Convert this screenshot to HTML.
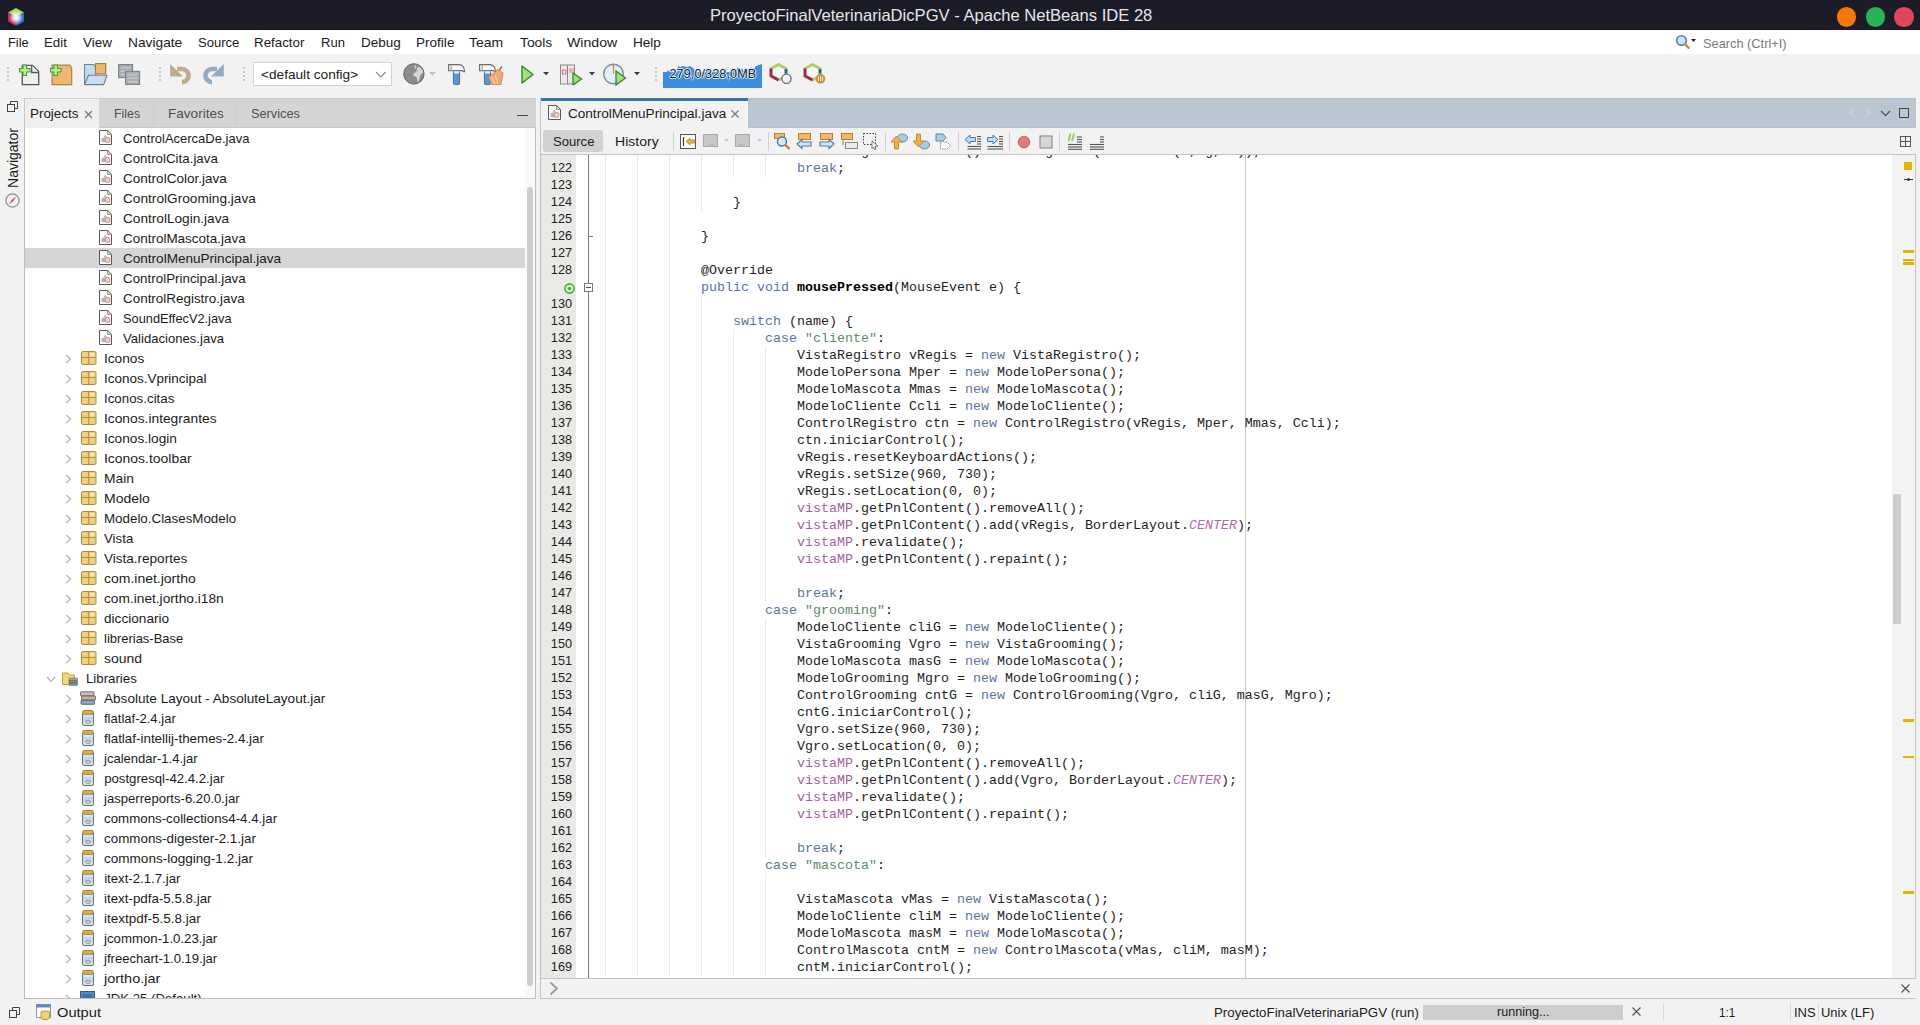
<!DOCTYPE html>
<html><head><meta charset="utf-8"><title>NetBeans</title>
<style>html,body{margin:0;padding:0;width:1920px;height:1025px;overflow:hidden;background:#f2f2f2;position:relative;font-family:'Liberation Sans', sans-serif}
svg{display:block}</style></head><body>
<div style="position:absolute;left:0px;top:0px;width:1920px;height:30px;background:#1b1c28;"></div><svg style="position:absolute;left:7px;top:7px" width="18" height="20" viewBox="0 0 18 20">
<defs><radialGradient id="ag" cx="0.5" cy="0.5" r="0.5"><stop offset="0" stop-color="#ffffff" stop-opacity="1"/><stop offset="0.45" stop-color="#ffffff" stop-opacity="0.75"/><stop offset="1" stop-color="#ffffff" stop-opacity="0"/></radialGradient></defs>
<polygon points="9,1 17,5.5 9,10 1,5.5" fill="#b5d65e"/>
<polygon points="1,5.5 9,10 9,19 1,14.5" fill="#c42a5c"/>
<polygon points="17,5.5 17,14.5 9,19 9,10" fill="#2f6fc0"/>
<circle cx="9" cy="10.5" r="7" fill="url(#ag)"/>
</svg><div style="position:absolute;left:710px;top:7.33px;white-space:pre;font-family:'Liberation Sans', sans-serif;font-size:16.5px;line-height:16.5px;color:#e6e6e9;transform:scaleX(1.0048);transform-origin:0 0;">ProyectoFinalVeterinariaDicPGV - Apache NetBeans IDE 28</div><div style="position:absolute;left:1836.75px;top:7px;width:19.5px;height:19.5px;border-radius:50%;background:#f57900"></div><div style="position:absolute;left:1865.75px;top:7px;width:19.5px;height:19.5px;border-radius:50%;background:#2ab256"></div><div style="position:absolute;left:1894.25px;top:7px;width:19.5px;height:19.5px;border-radius:50%;background:#e0465a"></div><div style="position:absolute;left:0px;top:30px;width:1920px;height:24px;background:#ffffff;"></div><div style="position:absolute;left:8.3px;top:35.96px;white-space:pre;font-family:'Liberation Sans', sans-serif;font-size:13.4px;line-height:13.4px;color:#1a1a1a;transform:scaleX(0.9536);transform-origin:0 0;">File</div><div style="position:absolute;left:44.3px;top:35.96px;white-space:pre;font-family:'Liberation Sans', sans-serif;font-size:13.4px;line-height:13.4px;color:#1a1a1a;transform:scaleX(0.993);transform-origin:0 0;">Edit</div><div style="position:absolute;left:83.3px;top:35.96px;white-space:pre;font-family:'Liberation Sans', sans-serif;font-size:13.4px;line-height:13.4px;color:#1a1a1a;transform:scaleX(1.0046);transform-origin:0 0;">View</div><div style="position:absolute;left:127.5px;top:35.96px;white-space:pre;font-family:'Liberation Sans', sans-serif;font-size:13.4px;line-height:13.4px;color:#1a1a1a;transform:scaleX(1.026);transform-origin:0 0;">Navigate</div><div style="position:absolute;left:197.5px;top:35.96px;white-space:pre;font-family:'Liberation Sans', sans-serif;font-size:13.4px;line-height:13.4px;color:#1a1a1a;transform:scaleX(0.9754);transform-origin:0 0;">Source</div><div style="position:absolute;left:254.3px;top:35.96px;white-space:pre;font-family:'Liberation Sans', sans-serif;font-size:13.4px;line-height:13.4px;color:#1a1a1a;transform:scaleX(0.9958);transform-origin:0 0;">Refactor</div><div style="position:absolute;left:320.5px;top:35.96px;white-space:pre;font-family:'Liberation Sans', sans-serif;font-size:13.4px;line-height:13.4px;color:#1a1a1a;transform:scaleX(0.9724);transform-origin:0 0;">Run</div><div style="position:absolute;left:360.5px;top:35.96px;white-space:pre;font-family:'Liberation Sans', sans-serif;font-size:13.4px;line-height:13.4px;color:#1a1a1a;transform:scaleX(1.0065);transform-origin:0 0;">Debug</div><div style="position:absolute;left:416.3px;top:35.96px;white-space:pre;font-family:'Liberation Sans', sans-serif;font-size:13.4px;line-height:13.4px;color:#1a1a1a;transform:scaleX(1.0121);transform-origin:0 0;">Profile</div><div style="position:absolute;left:469.3px;top:35.96px;white-space:pre;font-family:'Liberation Sans', sans-serif;font-size:13.4px;line-height:13.4px;color:#1a1a1a;transform:scaleX(1.0431);transform-origin:0 0;">Team</div><div style="position:absolute;left:519.5px;top:35.96px;white-space:pre;font-family:'Liberation Sans', sans-serif;font-size:13.4px;line-height:13.4px;color:#1a1a1a;transform:scaleX(1.0312);transform-origin:0 0;">Tools</div><div style="position:absolute;left:567px;top:35.96px;white-space:pre;font-family:'Liberation Sans', sans-serif;font-size:13.4px;line-height:13.4px;color:#1a1a1a;transform:scaleX(1.0551);transform-origin:0 0;">Window</div><div style="position:absolute;left:632.5px;top:35.96px;white-space:pre;font-family:'Liberation Sans', sans-serif;font-size:13.4px;line-height:13.4px;color:#1a1a1a;transform:scaleX(1.014);transform-origin:0 0;">Help</div><svg style="position:absolute;left:1675px;top:34px" width="22" height="16" viewBox="0 0 22 16">
<circle cx="6.5" cy="6.5" r="4.8" fill="#cfe3f7" stroke="#4d7fb8" stroke-width="1.6"/>
<line x1="10" y1="10" x2="13.5" y2="13.8" stroke="#c4862c" stroke-width="2.4" stroke-linecap="round"/>
<polygon points="16,5 21,5 18.5,8" fill="#222"/>
</svg><div style="position:absolute;left:1703px;top:37.53px;white-space:pre;font-family:'Liberation Sans', sans-serif;font-size:12.6px;line-height:12.6px;color:#7a7a7a;transform:scaleX(1.0161);transform-origin:0 0;">Search (Ctrl+I)</div><div style="position:absolute;left:0px;top:54px;width:1920px;height:44px;background:#f2f2f2;"></div><div style="position:absolute;left:7px;top:67px;width:2px;height:2px;background:#c8c8c8;"></div><div style="position:absolute;left:7px;top:71px;width:2px;height:2px;background:#c8c8c8;"></div><div style="position:absolute;left:7px;top:75px;width:2px;height:2px;background:#c8c8c8;"></div><div style="position:absolute;left:7px;top:79px;width:2px;height:2px;background:#c8c8c8;"></div><div style="position:absolute;left:159px;top:67px;width:2px;height:2px;background:#c8c8c8;"></div><div style="position:absolute;left:159px;top:71px;width:2px;height:2px;background:#c8c8c8;"></div><div style="position:absolute;left:159px;top:75px;width:2px;height:2px;background:#c8c8c8;"></div><div style="position:absolute;left:159px;top:79px;width:2px;height:2px;background:#c8c8c8;"></div><div style="position:absolute;left:243px;top:67px;width:2px;height:2px;background:#c8c8c8;"></div><div style="position:absolute;left:243px;top:71px;width:2px;height:2px;background:#c8c8c8;"></div><div style="position:absolute;left:243px;top:75px;width:2px;height:2px;background:#c8c8c8;"></div><div style="position:absolute;left:243px;top:79px;width:2px;height:2px;background:#c8c8c8;"></div><div style="position:absolute;left:655px;top:67px;width:2px;height:2px;background:#c8c8c8;"></div><div style="position:absolute;left:655px;top:71px;width:2px;height:2px;background:#c8c8c8;"></div><div style="position:absolute;left:655px;top:75px;width:2px;height:2px;background:#c8c8c8;"></div><div style="position:absolute;left:655px;top:79px;width:2px;height:2px;background:#c8c8c8;"></div><svg style="position:absolute;left:18px;top:64px" width="22" height="22" viewBox="0 0 22 22"><path d="M4.3 1.3 H14.5 L20.7 7.5 V20.7 H4.3 Z" fill="#efefef" stroke="#555" stroke-width="1.3" stroke-linejoin="miter"/>
<path d="M13.7 1.3 V8.5 H20.7" fill="#f8f8f8" stroke="#555" stroke-width="1.3"/>
<path d="M5 1 H8.5 V4.5 H12 V8 H8.5 V11.5 H5 V8 H1.5 V4.5 H5 Z" fill="#b4f28c" stroke="#4f9a34" stroke-width="1.1"/></svg><svg style="position:absolute;left:50px;top:64px" width="23" height="22" viewBox="0 0 23 22"><path d="M2.1 1.2 H19.5 L21.7 4 V20.7 H2.1 Z" fill="#f0b772" stroke="#a8824a" stroke-width="1.2"/>
<path d="M4 1 H7.5 V4.5 H11 V8 H7.5 V11.5 H4 V8 H0.5 V4.5 H4 Z" fill="#b4f28c" stroke="#4f9a34" stroke-width="1.1"/></svg><svg style="position:absolute;left:84px;top:63px" width="24" height="23" viewBox="0 0 24 23"><path d="M0.5 1.5 H9.5 L12 4.5 V21.5 H0.5 Z" fill="#c4daf0" stroke="#6a8298" stroke-width="1.1"/>
<rect x="11.5" y="0.6" width="10.2" height="10.2" fill="#f0b868" stroke="#9a7a48" stroke-width="1.1"/>
<path d="M4.5 12.3 H23 L19.7 21.6 H0.5 Z" fill="#c8dcf2" stroke="#6a8298" stroke-width="1.1" stroke-linejoin="round"/></svg><svg style="position:absolute;left:118px;top:64px" width="23" height="21" viewBox="0 0 23 21"><rect x="0.6" y="0.6" width="14" height="13" fill="#a9adb1" stroke="#7b8085" stroke-width="1.1"/>
<rect x="2.5" y="3" width="10" height="1.5" fill="#c3c6c9"/><rect x="2.5" y="6.5" width="10" height="1.5" fill="#c3c6c9"/><rect x="2.5" y="10" width="10" height="1.5" fill="#c3c6c9"/>
<rect x="7.6" y="7.4" width="14" height="13" fill="#a9adb1" stroke="#7b8085" stroke-width="1.1"/>
<rect x="9.5" y="10" width="10" height="1.5" fill="#c3c6c9"/><rect x="9.5" y="13.5" width="10" height="1.5" fill="#c3c6c9"/><rect x="9.5" y="17" width="10" height="1.5" fill="#c3c6c9"/></svg><svg style="position:absolute;left:170px;top:63px" width="22" height="22" viewBox="0 0 22 22"><path d="M12 19.1 A6.55 6.55 0 0 0 12 6 H7" fill="none" stroke="#bfad8a" stroke-width="4.7"/>
<polygon points="0.2,1 0.2,13.6 13,13.6" fill="#bfad8a"/></svg><svg style="position:absolute;left:203px;top:63px" width="22" height="22" viewBox="0 0 22 22"><path d="M9 19.1 A6.55 6.55 0 0 1 9 6 H14" fill="none" stroke="#92adc3" stroke-width="4.7"/>
<polygon points="20.8,1 20.8,13.6 8,13.6" fill="#92adc3"/></svg><div style="position:absolute;left:253px;top:62px;width:139px;height:24px;background:#fff;border:1px solid #d2d2d2;border-radius:1px;box-sizing:border-box;"></div><div style="position:absolute;left:260.5px;top:67.61px;white-space:pre;font-family:'Liberation Sans', sans-serif;font-size:13.1px;line-height:13.1px;color:#1a1a1a;transform:scaleX(1.042);transform-origin:0 0;">&lt;default config&gt;</div><svg style="position:absolute;left:375px;top:71px" width="12" height="8" viewBox="0 0 12 8"><polyline points="1,1 5.8,5.8 10.6,1" fill="none" stroke="#8a8a8a" stroke-width="1.2"/></svg><svg style="position:absolute;left:403px;top:63px" width="23" height="23" viewBox="0 0 23 23"><circle cx="10.9" cy="10.9" r="10.2" fill="#8c8c8c" stroke="#666" stroke-width="1"/>
<path d="M15 3.5 C18 4.5 20.2 7 20 9.5 C19 11 17.5 11 17.2 13 C16.5 15 16.8 17 15.5 19 C14.5 19 14.2 17 14 15.5 C13.2 13.8 12 13.2 10.3 12.8 C9.8 11.2 11 9.6 13 9.2 C14 7.2 13.8 5 15 3.5 Z" fill="#d4d4d4"/>
<ellipse cx="12.3" cy="3.8" rx="1.1" ry="2.1" fill="#c4c4c4"/></svg><svg style="position:absolute;left:429px;top:72px" width="7" height="4" viewBox="0 0 7 4"><polygon points="0,0 7,0 3.5,3.5" fill="#bdbdbd"/></svg><svg style="position:absolute;left:448px;top:64px" width="18" height="21" viewBox="0 0 18 21"><path d="M0.6 0.6 H11 C14 0.6 16.2 3 16.6 7.6 L15.6 7.6 C14.6 6.2 13.2 6.7 11.5 6.7 H0.6 Z" fill="#f6f6f6" stroke="#6a6a6a" stroke-width="1.1"/>
<line x1="3.2" y1="0.8" x2="3.2" y2="6.5" stroke="#8a8a8a" stroke-width="0.9"/>
<rect x="5.4" y="7" width="6.2" height="13.6" rx="1.6" fill="#5699d6" stroke="#3b6c9e" stroke-width="0.9"/>
<rect x="6" y="7.2" width="5" height="2.3" fill="#e6eef6"/></svg><svg style="position:absolute;left:479px;top:64px" width="25" height="21" viewBox="0 0 25 21"><path d="M0.6 0.6 H11 C14 0.6 16.2 3 16.6 7.6 L15.6 7.6 C14.6 6.2 13.2 6.7 11.5 6.7 H0.6 Z" fill="#f6f6f6" stroke="#6a6a6a" stroke-width="1.1"/>
<line x1="3.2" y1="0.8" x2="3.2" y2="6.5" stroke="#8a8a8a" stroke-width="0.9"/>
<rect x="5.4" y="7" width="6.2" height="13.6" rx="1.6" fill="#5699d6" stroke="#3b6c9e" stroke-width="0.9"/>
<rect x="6" y="7.2" width="5" height="2.3" fill="#e6eef6"/>
<polygon points="9.8,13.2 18.5,5.5 24,9 21.8,20.7 12.5,20.7" fill="#f2a878" stroke="#d87a48" stroke-width="0.9"/>
<line x1="13" y1="13" x2="16" y2="20" stroke="#f8d0a8" stroke-width="1.2"/><line x1="16.5" y1="11" x2="18.5" y2="20" stroke="#f8d0a8" stroke-width="1.2"/>
<line x1="20" y1="6.5" x2="23" y2="2.5" stroke="#b07050" stroke-width="1.6"/></svg><svg style="position:absolute;left:521px;top:65px" width="13" height="19" viewBox="0 0 13 19"><path d="M1 1 L12 9.5 L1 18 Z" fill="#9ee07a" stroke="#2f8a25" stroke-width="1.4" stroke-linejoin="round"/></svg><svg style="position:absolute;left:543px;top:72px" width="6" height="4" viewBox="0 0 6 4"><polygon points="0,0 6,0 3,3.3" fill="#3a3a3a"/></svg><svg style="position:absolute;left:560px;top:64px" width="23" height="21" viewBox="0 0 23 21"><rect x="0.5" y="1" width="14" height="19" fill="#eaeaea" stroke="#8a8a8a"/>
<line x1="7.5" y1="1" x2="7.5" y2="20" stroke="#8a8a8a"/>
<rect x="2.5" y="6" width="3.5" height="4" fill="none" stroke="#e07070"/>
<rect x="9" y="4" width="5" height="5" fill="#f4b0b0"/>
<path d="M13 9 L21.5 15 L13 21 Z" fill="#9ee07a" stroke="#2f8a25" stroke-width="1.3"/></svg><svg style="position:absolute;left:589px;top:72px" width="6" height="4" viewBox="0 0 6 4"><polygon points="0,0 6,0 3,3.3" fill="#3a3a3a"/></svg><svg style="position:absolute;left:603px;top:63px" width="24" height="23" viewBox="0 0 24 23"><circle cx="10.5" cy="11" r="9.8" fill="#e6f0fa" stroke="#7a8fa5" stroke-width="1.4"/>
<line x1="10.5" y1="1.5" x2="10.5" y2="11" stroke="#c09040" stroke-width="1.2"/>
<path d="M13 8 L22.5 15 L13 22 Z" fill="#9ee07a" stroke="#2f8a25" stroke-width="1.3"/></svg><svg style="position:absolute;left:634px;top:72px" width="6" height="4" viewBox="0 0 6 4"><polygon points="0,0 6,0 3,3.3" fill="#3a3a3a"/></svg><svg style="position:absolute;left:663px;top:64px" width="99" height="24" viewBox="0 0 99 24"><path d="M0 8 L4 8 L5 6 L7 8 L14 8 L15 2 L17 3 L20 2 L24 3 L27 2 L30 4 L33 8 L44 8 L45 5 L47 8 L62 8 L63 4 L64 8 L70 8 L71 4 L73 6 L75 3 L77 7 L79 4 L81 8 L84 5 L86 8 L88 3 L90 6 L93 2 L99 0 V24 H0 Z" fill="#3b8ee0"/></svg><div style="position:absolute;left:669.5px;top:68.33px;white-space:pre;font-family:'Liberation Sans', sans-serif;font-size:12.6px;line-height:12.6px;color:#141c28;letter-spacing:0.1px;text-shadow:-1px 0 0 #dfeeff,1px 0 0 #dfeeff,0 -1px 0 #dfeeff,0 1px 0 #dfeeff;">279,0/328,0MB</div><svg style="position:absolute;left:769px;top:63px" width="24" height="22" viewBox="0 0 24 22"><polygon points="9.5,1.5 17,5.5 17,13 9.5,17 2,13 2,5.5" fill="#f6f9f4" stroke="#a9d05e" stroke-width="2.8"/>
<polyline points="2,5.5 2,13 9.5,17" fill="none" stroke="#a8214f" stroke-width="2.8"/>
<polyline points="17,6 17,10.5" fill="none" stroke="#2d5d9d" stroke-width="2.8"/>
<circle cx="17.5" cy="15.8" r="4.6" fill="#f4f4f4" stroke="#66707a" stroke-width="1.3"/></svg><svg style="position:absolute;left:803px;top:63px" width="24" height="22" viewBox="0 0 24 22"><polygon points="9.5,1.5 17,5.5 17,13 9.5,17 2,13 2,5.5" fill="#f6f9f4" stroke="#a9d05e" stroke-width="2.8"/>
<polyline points="2,5.5 2,13 9.5,17" fill="none" stroke="#a8214f" stroke-width="2.8"/>
<polyline points="17,6 17,10.5" fill="none" stroke="#2d5d9d" stroke-width="2.8"/>
<circle cx="17.5" cy="15.8" r="4.8" fill="#c8923a"/><rect x="15" y="13.5" width="1" height="4.6" fill="#fbe8c0"/><rect x="17" y="13.5" width="1" height="4.6" fill="#fbe8c0"/><rect x="19" y="13.5" width="1" height="4.6" fill="#fbe8c0"/></svg><div style="position:absolute;left:0px;top:98px;width:24px;height:901px;background:#f2f2f2;"></div><svg style="position:absolute;left:7px;top:101px" width="11" height="11" viewBox="0 0 11 11"><rect x="0.5" y="3.5" width="7" height="7" fill="none" stroke="#444"/><path d="M3.5 3.5 V0.5 H10.5 V7.5 H7.5" fill="none" stroke="#444"/></svg><div style="position:absolute;left:-20px;top:151px;width:66px;height:14px;transform:rotate(-90deg);transform-origin:center;white-space:pre;font-family:'Liberation Sans', sans-serif;font-size:14px;line-height:14px;color:#1a1a1a;text-align:center">Navigator</div><svg style="position:absolute;left:5px;top:193px" width="15" height="15" viewBox="0 0 15 15"><circle cx="7.5" cy="7.5" r="6.6" fill="#f4f4f4" stroke="#8a8a8a" stroke-width="1.2"/>
<path d="M11 3.5 L6.5 7 L4 11.5 L8.5 8 Z" fill="#e04a5a"/></svg><div style="position:absolute;left:24px;top:98px;width:512px;height:30px;background:#d4d4d4;border-top:1px solid #c8c8c8;box-sizing:border-box;"></div><div style="position:absolute;left:24px;top:127px;width:512px;height:1px;background:#c6c6c6;"></div><div style="position:absolute;left:24px;top:98px;width:75px;height:30px;background:#efefef;border-top:1px solid #cfcfcf;border-left:1px solid #c8c8c8;box-sizing:border-box;"></div><div style="position:absolute;left:30.4px;top:106.94px;white-space:pre;font-family:'Liberation Sans', sans-serif;font-size:13.3px;line-height:13.3px;color:#1b1b1b;transform:scaleX(1.0082);transform-origin:0 0;">Projects</div><svg style="position:absolute;left:84px;top:110px" width="9" height="9" viewBox="0 0 9 9"><path d="M1 1 L8 8 M8 1 L1 8" stroke="#777" stroke-width="1.2"/></svg><div style="position:absolute;left:113.5px;top:106.94px;white-space:pre;font-family:'Liberation Sans', sans-serif;font-size:13.3px;line-height:13.3px;color:#505050;transform:scaleX(0.9317);transform-origin:0 0;">Files</div><div style="position:absolute;left:153px;top:102px;width:1px;height:24px;background:#cbcbcb;"></div><div style="position:absolute;left:168.2px;top:106.94px;white-space:pre;font-family:'Liberation Sans', sans-serif;font-size:13.3px;line-height:13.3px;color:#505050;transform:scaleX(1.0192);transform-origin:0 0;">Favorites</div><div style="position:absolute;left:236px;top:102px;width:1px;height:24px;background:#cbcbcb;"></div><div style="position:absolute;left:251px;top:106.94px;white-space:pre;font-family:'Liberation Sans', sans-serif;font-size:13.3px;line-height:13.3px;color:#505050;transform:scaleX(0.9585);transform-origin:0 0;">Services</div><div style="position:absolute;left:517px;top:115px;width:11px;height:1.3px;background:#444;"></div><div style="position:absolute;left:24px;top:128px;width:512px;height:871px;background:#ffffff;border-left:1px solid #bdbdbd;border-right:1px solid #bdbdbd;border-bottom:1px solid #bdbdbd;box-sizing:border-box;"></div><div style="position:absolute;left:525px;top:128px;width:10px;height:870px;background:#f9f9f9;"></div><div style="position:absolute;left:527px;top:187px;width:6px;height:799px;background:#cdcdcd;border-radius:3px;"></div><div style="position:absolute;left:25px;top:128px;width:500px;height:870px;overflow:hidden"><svg style="position:absolute;left:74px;top:2px" width="13" height="15" viewBox="0 0 13 15"><path d="M0.5 0.5 H8.7 L12.5 4.3 V14.5 H0.5 Z" fill="#fdfdfd" stroke="#585858" stroke-width="1" stroke-linejoin="miter"/>
<path d="M8.7 0.8 V4.3 H12.2" fill="none" stroke="#707070" stroke-width="0.9"/>
<rect x="2.6" y="8.2" width="4" height="3.8" fill="#a4b0cc"/>
<circle cx="8.4" cy="9.9" r="2.4" fill="#f6cfc8" stroke="#c99896" stroke-width="1.1"/>
<path d="M4.2 7.8 L6.3 4.8 L8.2 7.8 Z" fill="#cdb27a"/></svg><div style="position:absolute;left:97.8px;top:4.03px;white-space:pre;font-family:'Liberation Sans', sans-serif;font-size:13.2px;line-height:13.2px;color:#1b1b1b;transform:scaleX(0.9854);transform-origin:0 0;">ControlAcercaDe.java</div><svg style="position:absolute;left:74px;top:22px" width="13" height="15" viewBox="0 0 13 15"><path d="M0.5 0.5 H8.7 L12.5 4.3 V14.5 H0.5 Z" fill="#fdfdfd" stroke="#585858" stroke-width="1" stroke-linejoin="miter"/>
<path d="M8.7 0.8 V4.3 H12.2" fill="none" stroke="#707070" stroke-width="0.9"/>
<rect x="2.6" y="8.2" width="4" height="3.8" fill="#a4b0cc"/>
<circle cx="8.4" cy="9.9" r="2.4" fill="#f6cfc8" stroke="#c99896" stroke-width="1.1"/>
<path d="M4.2 7.8 L6.3 4.8 L8.2 7.8 Z" fill="#cdb27a"/></svg><div style="position:absolute;left:97.8px;top:24.03px;white-space:pre;font-family:'Liberation Sans', sans-serif;font-size:13.2px;line-height:13.2px;color:#1b1b1b;transform:scaleX(1.0108);transform-origin:0 0;">ControlCita.java</div><svg style="position:absolute;left:74px;top:42px" width="13" height="15" viewBox="0 0 13 15"><path d="M0.5 0.5 H8.7 L12.5 4.3 V14.5 H0.5 Z" fill="#fdfdfd" stroke="#585858" stroke-width="1" stroke-linejoin="miter"/>
<path d="M8.7 0.8 V4.3 H12.2" fill="none" stroke="#707070" stroke-width="0.9"/>
<rect x="2.6" y="8.2" width="4" height="3.8" fill="#a4b0cc"/>
<circle cx="8.4" cy="9.9" r="2.4" fill="#f6cfc8" stroke="#c99896" stroke-width="1.1"/>
<path d="M4.2 7.8 L6.3 4.8 L8.2 7.8 Z" fill="#cdb27a"/></svg><div style="position:absolute;left:97.8px;top:44.03px;white-space:pre;font-family:'Liberation Sans', sans-serif;font-size:13.2px;line-height:13.2px;color:#1b1b1b;transform:scaleX(1.0266);transform-origin:0 0;">ControlColor.java</div><svg style="position:absolute;left:74px;top:62px" width="13" height="15" viewBox="0 0 13 15"><path d="M0.5 0.5 H8.7 L12.5 4.3 V14.5 H0.5 Z" fill="#fdfdfd" stroke="#585858" stroke-width="1" stroke-linejoin="miter"/>
<path d="M8.7 0.8 V4.3 H12.2" fill="none" stroke="#707070" stroke-width="0.9"/>
<rect x="2.6" y="8.2" width="4" height="3.8" fill="#a4b0cc"/>
<circle cx="8.4" cy="9.9" r="2.4" fill="#f6cfc8" stroke="#c99896" stroke-width="1.1"/>
<path d="M4.2 7.8 L6.3 4.8 L8.2 7.8 Z" fill="#cdb27a"/></svg><div style="position:absolute;left:97.8px;top:64.03px;white-space:pre;font-family:'Liberation Sans', sans-serif;font-size:13.2px;line-height:13.2px;color:#1b1b1b;transform:scaleX(1.0356);transform-origin:0 0;">ControlGrooming.java</div><svg style="position:absolute;left:74px;top:82px" width="13" height="15" viewBox="0 0 13 15"><path d="M0.5 0.5 H8.7 L12.5 4.3 V14.5 H0.5 Z" fill="#fdfdfd" stroke="#585858" stroke-width="1" stroke-linejoin="miter"/>
<path d="M8.7 0.8 V4.3 H12.2" fill="none" stroke="#707070" stroke-width="0.9"/>
<rect x="2.6" y="8.2" width="4" height="3.8" fill="#a4b0cc"/>
<circle cx="8.4" cy="9.9" r="2.4" fill="#f6cfc8" stroke="#c99896" stroke-width="1.1"/>
<path d="M4.2 7.8 L6.3 4.8 L8.2 7.8 Z" fill="#cdb27a"/></svg><div style="position:absolute;left:97.8px;top:84.03px;white-space:pre;font-family:'Liberation Sans', sans-serif;font-size:13.2px;line-height:13.2px;color:#1b1b1b;transform:scaleX(1.0333);transform-origin:0 0;">ControlLogin.java</div><svg style="position:absolute;left:74px;top:102px" width="13" height="15" viewBox="0 0 13 15"><path d="M0.5 0.5 H8.7 L12.5 4.3 V14.5 H0.5 Z" fill="#fdfdfd" stroke="#585858" stroke-width="1" stroke-linejoin="miter"/>
<path d="M8.7 0.8 V4.3 H12.2" fill="none" stroke="#707070" stroke-width="0.9"/>
<rect x="2.6" y="8.2" width="4" height="3.8" fill="#a4b0cc"/>
<circle cx="8.4" cy="9.9" r="2.4" fill="#f6cfc8" stroke="#c99896" stroke-width="1.1"/>
<path d="M4.2 7.8 L6.3 4.8 L8.2 7.8 Z" fill="#cdb27a"/></svg><div style="position:absolute;left:97.8px;top:104.03px;white-space:pre;font-family:'Liberation Sans', sans-serif;font-size:13.2px;line-height:13.2px;color:#1b1b1b;transform:scaleX(1.0209);transform-origin:0 0;">ControlMascota.java</div><div style="position:absolute;left:0px;top:120px;width:500px;height:20px;background:#d5d5d5"></div><svg style="position:absolute;left:74px;top:122px" width="13" height="15" viewBox="0 0 13 15"><path d="M0.5 0.5 H8.7 L12.5 4.3 V14.5 H0.5 Z" fill="#fdfdfd" stroke="#585858" stroke-width="1" stroke-linejoin="miter"/>
<path d="M8.7 0.8 V4.3 H12.2" fill="none" stroke="#707070" stroke-width="0.9"/>
<rect x="2.6" y="8.2" width="4" height="3.8" fill="#a4b0cc"/>
<circle cx="8.4" cy="9.9" r="2.4" fill="#f6cfc8" stroke="#c99896" stroke-width="1.1"/>
<path d="M4.2 7.8 L6.3 4.8 L8.2 7.8 Z" fill="#cdb27a"/></svg><div style="position:absolute;left:97.8px;top:124.03px;white-space:pre;font-family:'Liberation Sans', sans-serif;font-size:13.2px;line-height:13.2px;color:#1b1b1b;transform:scaleX(1.0271);transform-origin:0 0;">ControlMenuPrincipal.java</div><svg style="position:absolute;left:74px;top:142px" width="13" height="15" viewBox="0 0 13 15"><path d="M0.5 0.5 H8.7 L12.5 4.3 V14.5 H0.5 Z" fill="#fdfdfd" stroke="#585858" stroke-width="1" stroke-linejoin="miter"/>
<path d="M8.7 0.8 V4.3 H12.2" fill="none" stroke="#707070" stroke-width="0.9"/>
<rect x="2.6" y="8.2" width="4" height="3.8" fill="#a4b0cc"/>
<circle cx="8.4" cy="9.9" r="2.4" fill="#f6cfc8" stroke="#c99896" stroke-width="1.1"/>
<path d="M4.2 7.8 L6.3 4.8 L8.2 7.8 Z" fill="#cdb27a"/></svg><div style="position:absolute;left:97.8px;top:144.03px;white-space:pre;font-family:'Liberation Sans', sans-serif;font-size:13.2px;line-height:13.2px;color:#1b1b1b;transform:scaleX(1.0147);transform-origin:0 0;">ControlPrincipal.java</div><svg style="position:absolute;left:74px;top:162px" width="13" height="15" viewBox="0 0 13 15"><path d="M0.5 0.5 H8.7 L12.5 4.3 V14.5 H0.5 Z" fill="#fdfdfd" stroke="#585858" stroke-width="1" stroke-linejoin="miter"/>
<path d="M8.7 0.8 V4.3 H12.2" fill="none" stroke="#707070" stroke-width="0.9"/>
<rect x="2.6" y="8.2" width="4" height="3.8" fill="#a4b0cc"/>
<circle cx="8.4" cy="9.9" r="2.4" fill="#f6cfc8" stroke="#c99896" stroke-width="1.1"/>
<path d="M4.2 7.8 L6.3 4.8 L8.2 7.8 Z" fill="#cdb27a"/></svg><div style="position:absolute;left:97.8px;top:164.03px;white-space:pre;font-family:'Liberation Sans', sans-serif;font-size:13.2px;line-height:13.2px;color:#1b1b1b;transform:scaleX(1.0179);transform-origin:0 0;">ControlRegistro.java</div><svg style="position:absolute;left:74px;top:182px" width="13" height="15" viewBox="0 0 13 15"><path d="M0.5 0.5 H8.7 L12.5 4.3 V14.5 H0.5 Z" fill="#fdfdfd" stroke="#585858" stroke-width="1" stroke-linejoin="miter"/>
<path d="M8.7 0.8 V4.3 H12.2" fill="none" stroke="#707070" stroke-width="0.9"/>
<rect x="2.6" y="8.2" width="4" height="3.8" fill="#a4b0cc"/>
<circle cx="8.4" cy="9.9" r="2.4" fill="#f6cfc8" stroke="#c99896" stroke-width="1.1"/>
<path d="M4.2 7.8 L6.3 4.8 L8.2 7.8 Z" fill="#cdb27a"/></svg><div style="position:absolute;left:97.8px;top:184.03px;white-space:pre;font-family:'Liberation Sans', sans-serif;font-size:13.2px;line-height:13.2px;color:#1b1b1b;transform:scaleX(0.9701);transform-origin:0 0;">SoundEffecV2.java</div><svg style="position:absolute;left:74px;top:202px" width="13" height="15" viewBox="0 0 13 15"><path d="M0.5 0.5 H8.7 L12.5 4.3 V14.5 H0.5 Z" fill="#fdfdfd" stroke="#585858" stroke-width="1" stroke-linejoin="miter"/>
<path d="M8.7 0.8 V4.3 H12.2" fill="none" stroke="#707070" stroke-width="0.9"/>
<rect x="2.6" y="8.2" width="4" height="3.8" fill="#a4b0cc"/>
<circle cx="8.4" cy="9.9" r="2.4" fill="#f6cfc8" stroke="#c99896" stroke-width="1.1"/>
<path d="M4.2 7.8 L6.3 4.8 L8.2 7.8 Z" fill="#cdb27a"/></svg><div style="position:absolute;left:97.8px;top:204.03px;white-space:pre;font-family:'Liberation Sans', sans-serif;font-size:13.2px;line-height:13.2px;color:#1b1b1b;transform:scaleX(0.9938);transform-origin:0 0;">Validaciones.java</div><svg style="position:absolute;left:40px;top:226px" width="7" height="10" viewBox="0 0 7 10"><polyline points="1,1 5.5,5 1,9" fill="none" stroke="#b2b2b2" stroke-width="1.15"/></svg><svg style="position:absolute;left:56px;top:223px" width="16" height="14" viewBox="0 0 16 14"><rect x="0.5" y="0.5" width="14.5" height="13" rx="1.5" fill="#efd07e" stroke="#b08c34" stroke-width="1"/>
<line x1="7.75" y1="1" x2="7.75" y2="13" stroke="#b08c34" stroke-width="1"/>
<line x1="1" y1="6.5" x2="14.5" y2="6.5" stroke="#b08c34" stroke-width="1"/>
<rect x="9" y="2" width="4.5" height="3.5" fill="#f8e8b0"/></svg><div style="position:absolute;left:79.2px;top:224.03px;white-space:pre;font-family:'Liberation Sans', sans-serif;font-size:13.2px;line-height:13.2px;color:#1b1b1b;transform:scaleX(1.0349);transform-origin:0 0;">Iconos</div><svg style="position:absolute;left:40px;top:246px" width="7" height="10" viewBox="0 0 7 10"><polyline points="1,1 5.5,5 1,9" fill="none" stroke="#b2b2b2" stroke-width="1.15"/></svg><svg style="position:absolute;left:56px;top:243px" width="16" height="14" viewBox="0 0 16 14"><rect x="0.5" y="0.5" width="14.5" height="13" rx="1.5" fill="#efd07e" stroke="#b08c34" stroke-width="1"/>
<line x1="7.75" y1="1" x2="7.75" y2="13" stroke="#b08c34" stroke-width="1"/>
<line x1="1" y1="6.5" x2="14.5" y2="6.5" stroke="#b08c34" stroke-width="1"/>
<rect x="9" y="2" width="4.5" height="3.5" fill="#f8e8b0"/></svg><div style="position:absolute;left:79.2px;top:244.03px;white-space:pre;font-family:'Liberation Sans', sans-serif;font-size:13.2px;line-height:13.2px;color:#1b1b1b;transform:scaleX(1.0211);transform-origin:0 0;">Iconos.Vprincipal</div><svg style="position:absolute;left:40px;top:266px" width="7" height="10" viewBox="0 0 7 10"><polyline points="1,1 5.5,5 1,9" fill="none" stroke="#b2b2b2" stroke-width="1.15"/></svg><svg style="position:absolute;left:56px;top:263px" width="16" height="14" viewBox="0 0 16 14"><rect x="0.5" y="0.5" width="14.5" height="13" rx="1.5" fill="#efd07e" stroke="#b08c34" stroke-width="1"/>
<line x1="7.75" y1="1" x2="7.75" y2="13" stroke="#b08c34" stroke-width="1"/>
<line x1="1" y1="6.5" x2="14.5" y2="6.5" stroke="#b08c34" stroke-width="1"/>
<rect x="9" y="2" width="4.5" height="3.5" fill="#f8e8b0"/></svg><div style="position:absolute;left:79.2px;top:264.03px;white-space:pre;font-family:'Liberation Sans', sans-serif;font-size:13.2px;line-height:13.2px;color:#1b1b1b;transform:scaleX(1.0105);transform-origin:0 0;">Iconos.citas</div><svg style="position:absolute;left:40px;top:286px" width="7" height="10" viewBox="0 0 7 10"><polyline points="1,1 5.5,5 1,9" fill="none" stroke="#b2b2b2" stroke-width="1.15"/></svg><svg style="position:absolute;left:56px;top:283px" width="16" height="14" viewBox="0 0 16 14"><rect x="0.5" y="0.5" width="14.5" height="13" rx="1.5" fill="#efd07e" stroke="#b08c34" stroke-width="1"/>
<line x1="7.75" y1="1" x2="7.75" y2="13" stroke="#b08c34" stroke-width="1"/>
<line x1="1" y1="6.5" x2="14.5" y2="6.5" stroke="#b08c34" stroke-width="1"/>
<rect x="9" y="2" width="4.5" height="3.5" fill="#f8e8b0"/></svg><div style="position:absolute;left:79.2px;top:284.03px;white-space:pre;font-family:'Liberation Sans', sans-serif;font-size:13.2px;line-height:13.2px;color:#1b1b1b;transform:scaleX(1.0445);transform-origin:0 0;">Iconos.integrantes</div><svg style="position:absolute;left:40px;top:306px" width="7" height="10" viewBox="0 0 7 10"><polyline points="1,1 5.5,5 1,9" fill="none" stroke="#b2b2b2" stroke-width="1.15"/></svg><svg style="position:absolute;left:56px;top:303px" width="16" height="14" viewBox="0 0 16 14"><rect x="0.5" y="0.5" width="14.5" height="13" rx="1.5" fill="#efd07e" stroke="#b08c34" stroke-width="1"/>
<line x1="7.75" y1="1" x2="7.75" y2="13" stroke="#b08c34" stroke-width="1"/>
<line x1="1" y1="6.5" x2="14.5" y2="6.5" stroke="#b08c34" stroke-width="1"/>
<rect x="9" y="2" width="4.5" height="3.5" fill="#f8e8b0"/></svg><div style="position:absolute;left:79.2px;top:304.03px;white-space:pre;font-family:'Liberation Sans', sans-serif;font-size:13.2px;line-height:13.2px;color:#1b1b1b;transform:scaleX(1.0355);transform-origin:0 0;">Iconos.login</div><svg style="position:absolute;left:40px;top:326px" width="7" height="10" viewBox="0 0 7 10"><polyline points="1,1 5.5,5 1,9" fill="none" stroke="#b2b2b2" stroke-width="1.15"/></svg><svg style="position:absolute;left:56px;top:323px" width="16" height="14" viewBox="0 0 16 14"><rect x="0.5" y="0.5" width="14.5" height="13" rx="1.5" fill="#efd07e" stroke="#b08c34" stroke-width="1"/>
<line x1="7.75" y1="1" x2="7.75" y2="13" stroke="#b08c34" stroke-width="1"/>
<line x1="1" y1="6.5" x2="14.5" y2="6.5" stroke="#b08c34" stroke-width="1"/>
<rect x="9" y="2" width="4.5" height="3.5" fill="#f8e8b0"/></svg><div style="position:absolute;left:79.2px;top:324.03px;white-space:pre;font-family:'Liberation Sans', sans-serif;font-size:13.2px;line-height:13.2px;color:#1b1b1b;transform:scaleX(1.0573);transform-origin:0 0;">Iconos.toolbar</div><svg style="position:absolute;left:40px;top:346px" width="7" height="10" viewBox="0 0 7 10"><polyline points="1,1 5.5,5 1,9" fill="none" stroke="#b2b2b2" stroke-width="1.15"/></svg><svg style="position:absolute;left:56px;top:343px" width="16" height="14" viewBox="0 0 16 14"><rect x="0.5" y="0.5" width="14.5" height="13" rx="1.5" fill="#efd07e" stroke="#b08c34" stroke-width="1"/>
<line x1="7.75" y1="1" x2="7.75" y2="13" stroke="#b08c34" stroke-width="1"/>
<line x1="1" y1="6.5" x2="14.5" y2="6.5" stroke="#b08c34" stroke-width="1"/>
<rect x="9" y="2" width="4.5" height="3.5" fill="#f8e8b0"/></svg><div style="position:absolute;left:79.2px;top:344.03px;white-space:pre;font-family:'Liberation Sans', sans-serif;font-size:13.2px;line-height:13.2px;color:#1b1b1b;transform:scaleX(1.0472);transform-origin:0 0;">Main</div><svg style="position:absolute;left:40px;top:366px" width="7" height="10" viewBox="0 0 7 10"><polyline points="1,1 5.5,5 1,9" fill="none" stroke="#b2b2b2" stroke-width="1.15"/></svg><svg style="position:absolute;left:56px;top:363px" width="16" height="14" viewBox="0 0 16 14"><rect x="0.5" y="0.5" width="14.5" height="13" rx="1.5" fill="#efd07e" stroke="#b08c34" stroke-width="1"/>
<line x1="7.75" y1="1" x2="7.75" y2="13" stroke="#b08c34" stroke-width="1"/>
<line x1="1" y1="6.5" x2="14.5" y2="6.5" stroke="#b08c34" stroke-width="1"/>
<rect x="9" y="2" width="4.5" height="3.5" fill="#f8e8b0"/></svg><div style="position:absolute;left:79.2px;top:364.03px;white-space:pre;font-family:'Liberation Sans', sans-serif;font-size:13.2px;line-height:13.2px;color:#1b1b1b;transform:scaleX(1.0595);transform-origin:0 0;">Modelo</div><svg style="position:absolute;left:40px;top:386px" width="7" height="10" viewBox="0 0 7 10"><polyline points="1,1 5.5,5 1,9" fill="none" stroke="#b2b2b2" stroke-width="1.15"/></svg><svg style="position:absolute;left:56px;top:383px" width="16" height="14" viewBox="0 0 16 14"><rect x="0.5" y="0.5" width="14.5" height="13" rx="1.5" fill="#efd07e" stroke="#b08c34" stroke-width="1"/>
<line x1="7.75" y1="1" x2="7.75" y2="13" stroke="#b08c34" stroke-width="1"/>
<line x1="1" y1="6.5" x2="14.5" y2="6.5" stroke="#b08c34" stroke-width="1"/>
<rect x="9" y="2" width="4.5" height="3.5" fill="#f8e8b0"/></svg><div style="position:absolute;left:79.2px;top:384.03px;white-space:pre;font-family:'Liberation Sans', sans-serif;font-size:13.2px;line-height:13.2px;color:#1b1b1b;transform:scaleX(1.0125);transform-origin:0 0;">Modelo.ClasesModelo</div><svg style="position:absolute;left:40px;top:406px" width="7" height="10" viewBox="0 0 7 10"><polyline points="1,1 5.5,5 1,9" fill="none" stroke="#b2b2b2" stroke-width="1.15"/></svg><svg style="position:absolute;left:56px;top:403px" width="16" height="14" viewBox="0 0 16 14"><rect x="0.5" y="0.5" width="14.5" height="13" rx="1.5" fill="#efd07e" stroke="#b08c34" stroke-width="1"/>
<line x1="7.75" y1="1" x2="7.75" y2="13" stroke="#b08c34" stroke-width="1"/>
<line x1="1" y1="6.5" x2="14.5" y2="6.5" stroke="#b08c34" stroke-width="1"/>
<rect x="9" y="2" width="4.5" height="3.5" fill="#f8e8b0"/></svg><div style="position:absolute;left:79.2px;top:404.03px;white-space:pre;font-family:'Liberation Sans', sans-serif;font-size:13.2px;line-height:13.2px;color:#1b1b1b;transform:scaleX(1.0075);transform-origin:0 0;">Vista</div><svg style="position:absolute;left:40px;top:426px" width="7" height="10" viewBox="0 0 7 10"><polyline points="1,1 5.5,5 1,9" fill="none" stroke="#b2b2b2" stroke-width="1.15"/></svg><svg style="position:absolute;left:56px;top:423px" width="16" height="14" viewBox="0 0 16 14"><rect x="0.5" y="0.5" width="14.5" height="13" rx="1.5" fill="#efd07e" stroke="#b08c34" stroke-width="1"/>
<line x1="7.75" y1="1" x2="7.75" y2="13" stroke="#b08c34" stroke-width="1"/>
<line x1="1" y1="6.5" x2="14.5" y2="6.5" stroke="#b08c34" stroke-width="1"/>
<rect x="9" y="2" width="4.5" height="3.5" fill="#f8e8b0"/></svg><div style="position:absolute;left:79.2px;top:424.03px;white-space:pre;font-family:'Liberation Sans', sans-serif;font-size:13.2px;line-height:13.2px;color:#1b1b1b;transform:scaleX(1.0252);transform-origin:0 0;">Vista.reportes</div><svg style="position:absolute;left:40px;top:446px" width="7" height="10" viewBox="0 0 7 10"><polyline points="1,1 5.5,5 1,9" fill="none" stroke="#b2b2b2" stroke-width="1.15"/></svg><svg style="position:absolute;left:56px;top:443px" width="16" height="14" viewBox="0 0 16 14"><rect x="0.5" y="0.5" width="14.5" height="13" rx="1.5" fill="#efd07e" stroke="#b08c34" stroke-width="1"/>
<line x1="7.75" y1="1" x2="7.75" y2="13" stroke="#b08c34" stroke-width="1"/>
<line x1="1" y1="6.5" x2="14.5" y2="6.5" stroke="#b08c34" stroke-width="1"/>
<rect x="9" y="2" width="4.5" height="3.5" fill="#f8e8b0"/></svg><div style="position:absolute;left:79.2px;top:444.03px;white-space:pre;font-family:'Liberation Sans', sans-serif;font-size:13.2px;line-height:13.2px;color:#1b1b1b;transform:scaleX(1.0601);transform-origin:0 0;">com.inet.jortho</div><svg style="position:absolute;left:40px;top:466px" width="7" height="10" viewBox="0 0 7 10"><polyline points="1,1 5.5,5 1,9" fill="none" stroke="#b2b2b2" stroke-width="1.15"/></svg><svg style="position:absolute;left:56px;top:463px" width="16" height="14" viewBox="0 0 16 14"><rect x="0.5" y="0.5" width="14.5" height="13" rx="1.5" fill="#efd07e" stroke="#b08c34" stroke-width="1"/>
<line x1="7.75" y1="1" x2="7.75" y2="13" stroke="#b08c34" stroke-width="1"/>
<line x1="1" y1="6.5" x2="14.5" y2="6.5" stroke="#b08c34" stroke-width="1"/>
<rect x="9" y="2" width="4.5" height="3.5" fill="#f8e8b0"/></svg><div style="position:absolute;left:79.2px;top:464.03px;white-space:pre;font-family:'Liberation Sans', sans-serif;font-size:13.2px;line-height:13.2px;color:#1b1b1b;transform:scaleX(1.0396);transform-origin:0 0;">com.inet.jortho.i18n</div><svg style="position:absolute;left:40px;top:486px" width="7" height="10" viewBox="0 0 7 10"><polyline points="1,1 5.5,5 1,9" fill="none" stroke="#b2b2b2" stroke-width="1.15"/></svg><svg style="position:absolute;left:56px;top:483px" width="16" height="14" viewBox="0 0 16 14"><rect x="0.5" y="0.5" width="14.5" height="13" rx="1.5" fill="#efd07e" stroke="#b08c34" stroke-width="1"/>
<line x1="7.75" y1="1" x2="7.75" y2="13" stroke="#b08c34" stroke-width="1"/>
<line x1="1" y1="6.5" x2="14.5" y2="6.5" stroke="#b08c34" stroke-width="1"/>
<rect x="9" y="2" width="4.5" height="3.5" fill="#f8e8b0"/></svg><div style="position:absolute;left:79.2px;top:484.03px;white-space:pre;font-family:'Liberation Sans', sans-serif;font-size:13.2px;line-height:13.2px;color:#1b1b1b;transform:scaleX(1.0325);transform-origin:0 0;">diccionario</div><svg style="position:absolute;left:40px;top:506px" width="7" height="10" viewBox="0 0 7 10"><polyline points="1,1 5.5,5 1,9" fill="none" stroke="#b2b2b2" stroke-width="1.15"/></svg><svg style="position:absolute;left:56px;top:503px" width="16" height="14" viewBox="0 0 16 14"><rect x="0.5" y="0.5" width="14.5" height="13" rx="1.5" fill="#efd07e" stroke="#b08c34" stroke-width="1"/>
<line x1="7.75" y1="1" x2="7.75" y2="13" stroke="#b08c34" stroke-width="1"/>
<line x1="1" y1="6.5" x2="14.5" y2="6.5" stroke="#b08c34" stroke-width="1"/>
<rect x="9" y="2" width="4.5" height="3.5" fill="#f8e8b0"/></svg><div style="position:absolute;left:79.2px;top:504.03px;white-space:pre;font-family:'Liberation Sans', sans-serif;font-size:13.2px;line-height:13.2px;color:#1b1b1b;transform:scaleX(0.9816);transform-origin:0 0;">librerias-Base</div><svg style="position:absolute;left:40px;top:526px" width="7" height="10" viewBox="0 0 7 10"><polyline points="1,1 5.5,5 1,9" fill="none" stroke="#b2b2b2" stroke-width="1.15"/></svg><svg style="position:absolute;left:56px;top:523px" width="16" height="14" viewBox="0 0 16 14"><rect x="0.5" y="0.5" width="14.5" height="13" rx="1.5" fill="#efd07e" stroke="#b08c34" stroke-width="1"/>
<line x1="7.75" y1="1" x2="7.75" y2="13" stroke="#b08c34" stroke-width="1"/>
<line x1="1" y1="6.5" x2="14.5" y2="6.5" stroke="#b08c34" stroke-width="1"/>
<rect x="9" y="2" width="4.5" height="3.5" fill="#f8e8b0"/></svg><div style="position:absolute;left:79.2px;top:524.03px;white-space:pre;font-family:'Liberation Sans', sans-serif;font-size:13.2px;line-height:13.2px;color:#1b1b1b;transform:scaleX(1.0586);transform-origin:0 0;">sound</div><svg style="position:absolute;left:21px;top:548px" width="10" height="7" viewBox="0 0 10 7"><polyline points="1,1 5,5.5 9,1" fill="none" stroke="#b2b2b2" stroke-width="1.15"/></svg><svg style="position:absolute;left:37px;top:544px" width="16" height="14" viewBox="0 0 16 14"><path d="M0.5 1 H6 L7.5 3 H12.5 V12.5 H0.5 Z" fill="#f0d878" stroke="#c0a040" stroke-width="1"/>
<rect x="7" y="6" width="8.5" height="2.5" fill="#a0a0a0" stroke="#707070" stroke-width="0.5"/>
<rect x="7" y="8.5" width="8.5" height="2.5" fill="#8a8a70" stroke="#606050" stroke-width="0.5"/>
<rect x="7" y="11" width="8.5" height="2.3" fill="#7a8aa0" stroke="#505a70" stroke-width="0.5"/></svg><div style="position:absolute;left:61.0px;top:544.03px;white-space:pre;font-family:'Liberation Sans', sans-serif;font-size:13.2px;line-height:13.2px;color:#1b1b1b;transform:scaleX(1.004);transform-origin:0 0;">Libraries</div><svg style="position:absolute;left:40px;top:566px" width="7" height="10" viewBox="0 0 7 10"><polyline points="1,1 5.5,5 1,9" fill="none" stroke="#b2b2b2" stroke-width="1.15"/></svg><svg style="position:absolute;left:55px;top:563px" width="16" height="14" viewBox="0 0 16 14"><rect x="0.5" y="0.8" width="13.5" height="4" rx="0.6" fill="#dcb4c0" stroke="#7a5a66" stroke-width="0.9"/>
<rect x="1.5" y="5" width="14" height="4" rx="0.6" fill="#b8b894" stroke="#6a6a50" stroke-width="0.9"/>
<rect x="1" y="9.3" width="13.5" height="4" rx="0.6" fill="#94a2c8" stroke="#4a5a80" stroke-width="0.9"/></svg><div style="position:absolute;left:79.2px;top:564.03px;white-space:pre;font-family:'Liberation Sans', sans-serif;font-size:13.2px;line-height:13.2px;color:#1b1b1b;transform:scaleX(1.0304);transform-origin:0 0;">Absolute Layout - AbsoluteLayout.jar</div><svg style="position:absolute;left:40px;top:586px" width="7" height="10" viewBox="0 0 7 10"><polyline points="1,1 5.5,5 1,9" fill="none" stroke="#b2b2b2" stroke-width="1.15"/></svg><svg style="position:absolute;left:57px;top:582px" width="12" height="16" viewBox="0 0 12 16"><rect x="0.6" y="2.5" width="11" height="13" rx="1.6" fill="#d4e6f6" stroke="#5a6a7c" stroke-width="1"/>
<rect x="1.2" y="7" width="9.8" height="5.5" fill="#c0d8ee"/>
<rect x="0.8" y="0.5" width="10.4" height="3.8" rx="1.2" fill="#dcb048" stroke="#9a7420" stroke-width="0.8"/>
<ellipse cx="6" cy="11.8" rx="2.3" ry="1.6" fill="none" stroke="#b08850" stroke-width="0.9"/></svg><div style="position:absolute;left:79.2px;top:584.03px;white-space:pre;font-family:'Liberation Sans', sans-serif;font-size:13.2px;line-height:13.2px;color:#1b1b1b;transform:scaleX(0.9886);transform-origin:0 0;">flatlaf-2.4.jar</div><svg style="position:absolute;left:40px;top:606px" width="7" height="10" viewBox="0 0 7 10"><polyline points="1,1 5.5,5 1,9" fill="none" stroke="#b2b2b2" stroke-width="1.15"/></svg><svg style="position:absolute;left:57px;top:602px" width="12" height="16" viewBox="0 0 12 16"><rect x="0.6" y="2.5" width="11" height="13" rx="1.6" fill="#d4e6f6" stroke="#5a6a7c" stroke-width="1"/>
<rect x="1.2" y="7" width="9.8" height="5.5" fill="#c0d8ee"/>
<rect x="0.8" y="0.5" width="10.4" height="3.8" rx="1.2" fill="#dcb048" stroke="#9a7420" stroke-width="0.8"/>
<ellipse cx="6" cy="11.8" rx="2.3" ry="1.6" fill="none" stroke="#b08850" stroke-width="0.9"/></svg><div style="position:absolute;left:79.2px;top:604.03px;white-space:pre;font-family:'Liberation Sans', sans-serif;font-size:13.2px;line-height:13.2px;color:#1b1b1b;transform:scaleX(1.0153);transform-origin:0 0;">flatlaf-intellij-themes-2.4.jar</div><svg style="position:absolute;left:40px;top:626px" width="7" height="10" viewBox="0 0 7 10"><polyline points="1,1 5.5,5 1,9" fill="none" stroke="#b2b2b2" stroke-width="1.15"/></svg><svg style="position:absolute;left:57px;top:622px" width="12" height="16" viewBox="0 0 12 16"><rect x="0.6" y="2.5" width="11" height="13" rx="1.6" fill="#d4e6f6" stroke="#5a6a7c" stroke-width="1"/>
<rect x="1.2" y="7" width="9.8" height="5.5" fill="#c0d8ee"/>
<rect x="0.8" y="0.5" width="10.4" height="3.8" rx="1.2" fill="#dcb048" stroke="#9a7420" stroke-width="0.8"/>
<ellipse cx="6" cy="11.8" rx="2.3" ry="1.6" fill="none" stroke="#b08850" stroke-width="0.9"/></svg><div style="position:absolute;left:79.2px;top:624.03px;white-space:pre;font-family:'Liberation Sans', sans-serif;font-size:13.2px;line-height:13.2px;color:#1b1b1b;transform:scaleX(0.989);transform-origin:0 0;">jcalendar-1.4.jar</div><svg style="position:absolute;left:40px;top:646px" width="7" height="10" viewBox="0 0 7 10"><polyline points="1,1 5.5,5 1,9" fill="none" stroke="#b2b2b2" stroke-width="1.15"/></svg><svg style="position:absolute;left:57px;top:642px" width="12" height="16" viewBox="0 0 12 16"><rect x="0.6" y="2.5" width="11" height="13" rx="1.6" fill="#d4e6f6" stroke="#5a6a7c" stroke-width="1"/>
<rect x="1.2" y="7" width="9.8" height="5.5" fill="#c0d8ee"/>
<rect x="0.8" y="0.5" width="10.4" height="3.8" rx="1.2" fill="#dcb048" stroke="#9a7420" stroke-width="0.8"/>
<ellipse cx="6" cy="11.8" rx="2.3" ry="1.6" fill="none" stroke="#b08850" stroke-width="0.9"/></svg><div style="position:absolute;left:79.2px;top:644.03px;white-space:pre;font-family:'Liberation Sans', sans-serif;font-size:13.2px;line-height:13.2px;color:#1b1b1b;">postgresql-42.4.2.jar</div><svg style="position:absolute;left:40px;top:666px" width="7" height="10" viewBox="0 0 7 10"><polyline points="1,1 5.5,5 1,9" fill="none" stroke="#b2b2b2" stroke-width="1.15"/></svg><svg style="position:absolute;left:57px;top:662px" width="12" height="16" viewBox="0 0 12 16"><rect x="0.6" y="2.5" width="11" height="13" rx="1.6" fill="#d4e6f6" stroke="#5a6a7c" stroke-width="1"/>
<rect x="1.2" y="7" width="9.8" height="5.5" fill="#c0d8ee"/>
<rect x="0.8" y="0.5" width="10.4" height="3.8" rx="1.2" fill="#dcb048" stroke="#9a7420" stroke-width="0.8"/>
<ellipse cx="6" cy="11.8" rx="2.3" ry="1.6" fill="none" stroke="#b08850" stroke-width="0.9"/></svg><div style="position:absolute;left:79.2px;top:664.03px;white-space:pre;font-family:'Liberation Sans', sans-serif;font-size:13.2px;line-height:13.2px;color:#1b1b1b;transform:scaleX(0.9945);transform-origin:0 0;">jasperreports-6.20.0.jar</div><svg style="position:absolute;left:40px;top:686px" width="7" height="10" viewBox="0 0 7 10"><polyline points="1,1 5.5,5 1,9" fill="none" stroke="#b2b2b2" stroke-width="1.15"/></svg><svg style="position:absolute;left:57px;top:682px" width="12" height="16" viewBox="0 0 12 16"><rect x="0.6" y="2.5" width="11" height="13" rx="1.6" fill="#d4e6f6" stroke="#5a6a7c" stroke-width="1"/>
<rect x="1.2" y="7" width="9.8" height="5.5" fill="#c0d8ee"/>
<rect x="0.8" y="0.5" width="10.4" height="3.8" rx="1.2" fill="#dcb048" stroke="#9a7420" stroke-width="0.8"/>
<ellipse cx="6" cy="11.8" rx="2.3" ry="1.6" fill="none" stroke="#b08850" stroke-width="0.9"/></svg><div style="position:absolute;left:79.2px;top:684.03px;white-space:pre;font-family:'Liberation Sans', sans-serif;font-size:13.2px;line-height:13.2px;color:#1b1b1b;transform:scaleX(1.0091);transform-origin:0 0;">commons-collections4-4.4.jar</div><svg style="position:absolute;left:40px;top:706px" width="7" height="10" viewBox="0 0 7 10"><polyline points="1,1 5.5,5 1,9" fill="none" stroke="#b2b2b2" stroke-width="1.15"/></svg><svg style="position:absolute;left:57px;top:702px" width="12" height="16" viewBox="0 0 12 16"><rect x="0.6" y="2.5" width="11" height="13" rx="1.6" fill="#d4e6f6" stroke="#5a6a7c" stroke-width="1"/>
<rect x="1.2" y="7" width="9.8" height="5.5" fill="#c0d8ee"/>
<rect x="0.8" y="0.5" width="10.4" height="3.8" rx="1.2" fill="#dcb048" stroke="#9a7420" stroke-width="0.8"/>
<ellipse cx="6" cy="11.8" rx="2.3" ry="1.6" fill="none" stroke="#b08850" stroke-width="0.9"/></svg><div style="position:absolute;left:79.2px;top:704.03px;white-space:pre;font-family:'Liberation Sans', sans-serif;font-size:13.2px;line-height:13.2px;color:#1b1b1b;transform:scaleX(1.0159);transform-origin:0 0;">commons-digester-2.1.jar</div><svg style="position:absolute;left:40px;top:726px" width="7" height="10" viewBox="0 0 7 10"><polyline points="1,1 5.5,5 1,9" fill="none" stroke="#b2b2b2" stroke-width="1.15"/></svg><svg style="position:absolute;left:57px;top:722px" width="12" height="16" viewBox="0 0 12 16"><rect x="0.6" y="2.5" width="11" height="13" rx="1.6" fill="#d4e6f6" stroke="#5a6a7c" stroke-width="1"/>
<rect x="1.2" y="7" width="9.8" height="5.5" fill="#c0d8ee"/>
<rect x="0.8" y="0.5" width="10.4" height="3.8" rx="1.2" fill="#dcb048" stroke="#9a7420" stroke-width="0.8"/>
<ellipse cx="6" cy="11.8" rx="2.3" ry="1.6" fill="none" stroke="#b08850" stroke-width="0.9"/></svg><div style="position:absolute;left:79.2px;top:724.03px;white-space:pre;font-family:'Liberation Sans', sans-serif;font-size:13.2px;line-height:13.2px;color:#1b1b1b;transform:scaleX(1.0267);transform-origin:0 0;">commons-logging-1.2.jar</div><svg style="position:absolute;left:40px;top:746px" width="7" height="10" viewBox="0 0 7 10"><polyline points="1,1 5.5,5 1,9" fill="none" stroke="#b2b2b2" stroke-width="1.15"/></svg><svg style="position:absolute;left:57px;top:742px" width="12" height="16" viewBox="0 0 12 16"><rect x="0.6" y="2.5" width="11" height="13" rx="1.6" fill="#d4e6f6" stroke="#5a6a7c" stroke-width="1"/>
<rect x="1.2" y="7" width="9.8" height="5.5" fill="#c0d8ee"/>
<rect x="0.8" y="0.5" width="10.4" height="3.8" rx="1.2" fill="#dcb048" stroke="#9a7420" stroke-width="0.8"/>
<ellipse cx="6" cy="11.8" rx="2.3" ry="1.6" fill="none" stroke="#b08850" stroke-width="0.9"/></svg><div style="position:absolute;left:79.2px;top:744.03px;white-space:pre;font-family:'Liberation Sans', sans-serif;font-size:13.2px;line-height:13.2px;color:#1b1b1b;">itext-2.1.7.jar</div><svg style="position:absolute;left:40px;top:766px" width="7" height="10" viewBox="0 0 7 10"><polyline points="1,1 5.5,5 1,9" fill="none" stroke="#b2b2b2" stroke-width="1.15"/></svg><svg style="position:absolute;left:57px;top:762px" width="12" height="16" viewBox="0 0 12 16"><rect x="0.6" y="2.5" width="11" height="13" rx="1.6" fill="#d4e6f6" stroke="#5a6a7c" stroke-width="1"/>
<rect x="1.2" y="7" width="9.8" height="5.5" fill="#c0d8ee"/>
<rect x="0.8" y="0.5" width="10.4" height="3.8" rx="1.2" fill="#dcb048" stroke="#9a7420" stroke-width="0.8"/>
<ellipse cx="6" cy="11.8" rx="2.3" ry="1.6" fill="none" stroke="#b08850" stroke-width="0.9"/></svg><div style="position:absolute;left:79.2px;top:764.03px;white-space:pre;font-family:'Liberation Sans', sans-serif;font-size:13.2px;line-height:13.2px;color:#1b1b1b;transform:scaleX(1.0117);transform-origin:0 0;">itext-pdfa-5.5.8.jar</div><svg style="position:absolute;left:40px;top:786px" width="7" height="10" viewBox="0 0 7 10"><polyline points="1,1 5.5,5 1,9" fill="none" stroke="#b2b2b2" stroke-width="1.15"/></svg><svg style="position:absolute;left:57px;top:782px" width="12" height="16" viewBox="0 0 12 16"><rect x="0.6" y="2.5" width="11" height="13" rx="1.6" fill="#d4e6f6" stroke="#5a6a7c" stroke-width="1"/>
<rect x="1.2" y="7" width="9.8" height="5.5" fill="#c0d8ee"/>
<rect x="0.8" y="0.5" width="10.4" height="3.8" rx="1.2" fill="#dcb048" stroke="#9a7420" stroke-width="0.8"/>
<ellipse cx="6" cy="11.8" rx="2.3" ry="1.6" fill="none" stroke="#b08850" stroke-width="0.9"/></svg><div style="position:absolute;left:79.2px;top:784.03px;white-space:pre;font-family:'Liberation Sans', sans-serif;font-size:13.2px;line-height:13.2px;color:#1b1b1b;transform:scaleX(1.022);transform-origin:0 0;">itextpdf-5.5.8.jar</div><svg style="position:absolute;left:40px;top:806px" width="7" height="10" viewBox="0 0 7 10"><polyline points="1,1 5.5,5 1,9" fill="none" stroke="#b2b2b2" stroke-width="1.15"/></svg><svg style="position:absolute;left:57px;top:802px" width="12" height="16" viewBox="0 0 12 16"><rect x="0.6" y="2.5" width="11" height="13" rx="1.6" fill="#d4e6f6" stroke="#5a6a7c" stroke-width="1"/>
<rect x="1.2" y="7" width="9.8" height="5.5" fill="#c0d8ee"/>
<rect x="0.8" y="0.5" width="10.4" height="3.8" rx="1.2" fill="#dcb048" stroke="#9a7420" stroke-width="0.8"/>
<ellipse cx="6" cy="11.8" rx="2.3" ry="1.6" fill="none" stroke="#b08850" stroke-width="0.9"/></svg><div style="position:absolute;left:79.2px;top:804.03px;white-space:pre;font-family:'Liberation Sans', sans-serif;font-size:13.2px;line-height:13.2px;color:#1b1b1b;transform:scaleX(1.003);transform-origin:0 0;">jcommon-1.0.23.jar</div><svg style="position:absolute;left:40px;top:826px" width="7" height="10" viewBox="0 0 7 10"><polyline points="1,1 5.5,5 1,9" fill="none" stroke="#b2b2b2" stroke-width="1.15"/></svg><svg style="position:absolute;left:57px;top:822px" width="12" height="16" viewBox="0 0 12 16"><rect x="0.6" y="2.5" width="11" height="13" rx="1.6" fill="#d4e6f6" stroke="#5a6a7c" stroke-width="1"/>
<rect x="1.2" y="7" width="9.8" height="5.5" fill="#c0d8ee"/>
<rect x="0.8" y="0.5" width="10.4" height="3.8" rx="1.2" fill="#dcb048" stroke="#9a7420" stroke-width="0.8"/>
<ellipse cx="6" cy="11.8" rx="2.3" ry="1.6" fill="none" stroke="#b08850" stroke-width="0.9"/></svg><div style="position:absolute;left:79.2px;top:824.03px;white-space:pre;font-family:'Liberation Sans', sans-serif;font-size:13.2px;line-height:13.2px;color:#1b1b1b;transform:scaleX(0.99);transform-origin:0 0;">jfreechart-1.0.19.jar</div><svg style="position:absolute;left:40px;top:846px" width="7" height="10" viewBox="0 0 7 10"><polyline points="1,1 5.5,5 1,9" fill="none" stroke="#b2b2b2" stroke-width="1.15"/></svg><svg style="position:absolute;left:57px;top:842px" width="12" height="16" viewBox="0 0 12 16"><rect x="0.6" y="2.5" width="11" height="13" rx="1.6" fill="#d4e6f6" stroke="#5a6a7c" stroke-width="1"/>
<rect x="1.2" y="7" width="9.8" height="5.5" fill="#c0d8ee"/>
<rect x="0.8" y="0.5" width="10.4" height="3.8" rx="1.2" fill="#dcb048" stroke="#9a7420" stroke-width="0.8"/>
<ellipse cx="6" cy="11.8" rx="2.3" ry="1.6" fill="none" stroke="#b08850" stroke-width="0.9"/></svg><div style="position:absolute;left:79.2px;top:844.03px;white-space:pre;font-family:'Liberation Sans', sans-serif;font-size:13.2px;line-height:13.2px;color:#1b1b1b;transform:scaleX(1.0965);transform-origin:0 0;">jortho.jar</div><svg style="position:absolute;left:40px;top:866px" width="7" height="10" viewBox="0 0 7 10"><polyline points="1,1 5.5,5 1,9" fill="none" stroke="#b2b2b2" stroke-width="1.15"/></svg><svg style="position:absolute;left:55px;top:863px" width="16" height="14" viewBox="0 0 16 14"><rect x="0.5" y="0.5" width="14" height="12" fill="#5a88c0" stroke="#3a5a80" stroke-width="1"/>
<rect x="2.5" y="3" width="10" height="6" fill="#3a70b0"/></svg><div style="position:absolute;left:79.2px;top:864.03px;white-space:pre;font-family:'Liberation Sans', sans-serif;font-size:13.2px;line-height:13.2px;color:#1b1b1b;">JDK 25 (Default)</div></div><div style="position:absolute;left:24px;top:998px;width:512px;height:1px;background:#bdbdbd;"></div><div style="position:absolute;left:540px;top:98px;width:1376px;height:30px;background:#bac7d2;border-top:1px solid #b2bec8;border-bottom:1px solid #b4bec8;box-sizing:border-box;"></div><div style="position:absolute;left:540px;top:101px;width:208px;height:27px;background:#f2f2f2;"></div><div style="position:absolute;left:540px;top:98px;width:208px;height:3px;background:#3d73ad;"></div><svg style="position:absolute;left:548px;top:105px" width="13" height="15" viewBox="0 0 13 15"><path d="M0.5 0.5 H8.7 L12.5 4.3 V14.5 H0.5 Z" fill="#fdfdfd" stroke="#585858" stroke-width="1" stroke-linejoin="miter"/>
<path d="M8.7 0.8 V4.3 H12.2" fill="none" stroke="#707070" stroke-width="0.9"/>
<rect x="2.6" y="8.2" width="4" height="3.8" fill="#a4b0cc"/>
<circle cx="8.4" cy="9.9" r="2.4" fill="#f6cfc8" stroke="#c99896" stroke-width="1.1"/>
<path d="M4.2 7.8 L6.3 4.8 L8.2 7.8 Z" fill="#cdb27a"/></svg><div style="position:absolute;left:567.5px;top:107.28px;white-space:pre;font-family:'Liberation Sans', sans-serif;font-size:13.25px;line-height:13.25px;color:#1b1b1b;transform:scaleX(1.0232);transform-origin:0 0;">ControlMenuPrincipal.java</div><svg style="position:absolute;left:731px;top:110px" width="8" height="8" viewBox="0 0 8 8"><path d="M0.5 0.5 L7.5 7.5 M7.5 0.5 L0.5 7.5" stroke="#777" stroke-width="1.2"/></svg><svg style="position:absolute;left:1848px;top:107px" width="9" height="12" viewBox="0 0 9 12"><polyline points="7,1 2,6 7,11" fill="none" stroke="#c9d0d6" stroke-width="1.5"/></svg><svg style="position:absolute;left:1863px;top:107px" width="9" height="12" viewBox="0 0 9 12"><polyline points="2,1 7,6 2,11" fill="none" stroke="#c9d0d6" stroke-width="1.5"/></svg><svg style="position:absolute;left:1880px;top:110px" width="11" height="7" viewBox="0 0 11 7"><polyline points="1,1 5.5,5.5 10,1" fill="none" stroke="#555" stroke-width="1.3"/></svg><div style="position:absolute;left:1899px;top:108px;width:10px;height:10px;border:1.2px solid #444;box-sizing:border-box;"></div><div style="position:absolute;left:1915px;top:98px;width:1px;height:901px;background:#c4c4c4;"></div><div style="position:absolute;left:540px;top:128px;width:1376px;height:26px;background:#f2f2f2;border-left:1px solid #c4c4c4;box-sizing:border-box;"></div><div style="position:absolute;left:540px;top:154px;width:1376px;height:1px;background:#c2c2c2;"></div><div style="position:absolute;left:543px;top:130px;width:60px;height:22px;background:#d2d2d2;border-radius:3px;"></div><div style="position:absolute;left:553.4px;top:135.34px;white-space:pre;font-family:'Liberation Sans', sans-serif;font-size:13.3px;line-height:13.3px;color:#1b1b1b;transform:scaleX(0.9827);transform-origin:0 0;">Source</div><div style="position:absolute;left:615.3px;top:135.34px;white-space:pre;font-family:'Liberation Sans', sans-serif;font-size:13.3px;line-height:13.3px;color:#1b1b1b;transform:scaleX(1.0555);transform-origin:0 0;">History</div><div style="position:absolute;left:673px;top:132px;width:1px;height:19px;background:#d0d0d0;"></div><div style="position:absolute;left:768px;top:132px;width:1px;height:19px;background:#d0d0d0;"></div><div style="position:absolute;left:885px;top:132px;width:1px;height:19px;background:#d0d0d0;"></div><div style="position:absolute;left:958px;top:132px;width:1px;height:19px;background:#d0d0d0;"></div><div style="position:absolute;left:1009px;top:132px;width:1px;height:19px;background:#d0d0d0;"></div><div style="position:absolute;left:1059px;top:132px;width:1px;height:19px;background:#d0d0d0;"></div><svg style="position:absolute;left:680px;top:133px" width="17" height="17" viewBox="0 0 17 17"><rect x="0.5" y="1.5" width="15" height="14" fill="#fff" stroke="#555"/>
<line x1="3.5" y1="4" x2="3.5" y2="13" stroke="#333" stroke-width="1.2"/>
<path d="M6 8.5 L10 5 V7 H15 V10 H10 V12 Z" fill="#f0b040" stroke="#c08020" stroke-width="0.8"/></svg><svg style="position:absolute;left:703px;top:134px" width="16" height="16" viewBox="0 0 16 16"><rect x="0.5" y="0.5" width="14" height="12" fill="#c8c8c8" stroke="#a8a8a8"/><path d="M5 10 L9 13 L13 10" fill="#b8b8b8"/></svg><svg style="position:absolute;left:724px;top:139px" width="5" height="4" viewBox="0 0 5 4"><polygon points="0,0 5,0 2.5,3" fill="#c8c8c8"/></svg><svg style="position:absolute;left:735px;top:134px" width="16" height="16" viewBox="0 0 16 16"><rect x="0.5" y="0.5" width="14" height="12" fill="#c8c8c8" stroke="#a8a8a8"/><path d="M2 10 L6 13 L10 10" fill="#b8b8b8"/></svg><svg style="position:absolute;left:757px;top:139px" width="5" height="4" viewBox="0 0 5 4"><polygon points="0,0 5,0 2.5,3" fill="#c8c8c8"/></svg><svg style="position:absolute;left:774px;top:133px" width="17" height="17" viewBox="0 0 17 17"><rect x="0.5" y="0.5" width="10" height="5" fill="#f3b866" stroke="#c08030"/>
<circle cx="8" cy="8.5" r="4.5" fill="#d6e8f8" stroke="#4a7aa8" stroke-width="1.4"/>
<line x1="11" y1="11.5" x2="15.5" y2="16" stroke="#c07020" stroke-width="2"/></svg><svg style="position:absolute;left:796px;top:133px" width="17" height="17" viewBox="0 0 17 17"><rect x="2.5" y="0.5" width="12" height="6" fill="#f3b866" stroke="#c08030"/>
<path d="M1 11 L6 6.5 V9 H15 V13 H6 V15.5 Z" fill="#d6e8f8" stroke="#4a7aa8" stroke-width="1.1"/></svg><svg style="position:absolute;left:818px;top:133px" width="17" height="17" viewBox="0 0 17 17"><rect x="2.5" y="0.5" width="12" height="6" fill="#f3b866" stroke="#c08030"/>
<path d="M16 11 L11 6.5 V9 H2 V13 H11 V15.5 Z" fill="#d6e8f8" stroke="#4a7aa8" stroke-width="1.1"/></svg><svg style="position:absolute;left:841px;top:133px" width="17" height="17" viewBox="0 0 17 17"><rect x="0.5" y="0.5" width="11" height="6" fill="#f3b866" stroke="#c08030"/>
<rect x="4.5" y="9.5" width="12" height="6" fill="#eaeaea" stroke="#8a8a8a"/>
<line x1="2" y1="7" x2="2" y2="12" stroke="#8a8a8a"/></svg><svg style="position:absolute;left:863px;top:133px" width="16" height="17" viewBox="0 0 16 17"><rect x="0.5" y="0.5" width="12" height="11" fill="none" stroke="#444" stroke-dasharray="1.5,1.5"/>
<path d="M9 8 L15 13 L12 13.5 L13 16 L11.5 16.5 L10.5 14 L9 15.5 Z" fill="#fff" stroke="#555" stroke-width="0.8"/></svg><svg style="position:absolute;left:891px;top:133px" width="17" height="17" viewBox="0 0 17 17"><ellipse cx="11.5" cy="5" rx="5" ry="4" fill="#a8cce8" stroke="#5a8ab0"/>
<path d="M5.5 3 L11 9 H7.5 V16 H3.5 V9 H0 Z" fill="#f3b040" stroke="#c08020" stroke-width="0.8"/></svg><svg style="position:absolute;left:913px;top:133px" width="17" height="17" viewBox="0 0 17 17"><ellipse cx="11.5" cy="12" rx="5" ry="4" fill="#a8cce8" stroke="#5a8ab0"/>
<path d="M5.5 14 L11 8 H7.5 V1 H3.5 V8 H0 Z" fill="#f3b040" stroke="#c08020" stroke-width="0.8"/></svg><svg style="position:absolute;left:935px;top:133px" width="17" height="17" viewBox="0 0 17 17"><path d="M1 1 H8 L11 4.5 L8 8 H1 Z" fill="#a8cce8" stroke="#5a8ab0"/>
<path d="M5.5 9 H12 L15.5 12.5 L12 16 H5.5 Z" fill="#fff" stroke="#8a8a8a" stroke-dasharray="1.5,1"/></svg><svg style="position:absolute;left:964px;top:132px" width="18" height="18" viewBox="0 0 18 18"><path d="M1 7.5 L6 3 V5.5 H11.5 V9.5 H6 V12 Z" fill="#bcdcf6" stroke="#4a7aa8" stroke-width="1"/><line x1="13" y1="4.5" x2="17" y2="4.5" stroke="#555" stroke-width="1.1"/><line x1="13" y1="7" x2="17" y2="7" stroke="#555" stroke-width="1.1"/><line x1="13" y1="9.5" x2="17" y2="9.5" stroke="#555" stroke-width="1.1"/><line x1="13" y1="12" x2="17" y2="12" stroke="#555" stroke-width="1.1"/><line x1="3.5" y1="14.5" x2="17" y2="14.5" stroke="#555" stroke-width="1.1"/><line x1="3.5" y1="17" x2="17" y2="17" stroke="#555" stroke-width="1.1"/></svg><svg style="position:absolute;left:986px;top:132px" width="18" height="18" viewBox="0 0 18 18"><path d="M12 7.5 L7 3 V5.5 H1.5 V9.5 H7 V12 Z" fill="#bcdcf6" stroke="#4a7aa8" stroke-width="1"/><line x1="13" y1="4.5" x2="17" y2="4.5" stroke="#555" stroke-width="1.1"/><line x1="13" y1="7" x2="17" y2="7" stroke="#555" stroke-width="1.1"/><line x1="13" y1="9.5" x2="17" y2="9.5" stroke="#555" stroke-width="1.1"/><line x1="13" y1="12" x2="17" y2="12" stroke="#555" stroke-width="1.1"/><line x1="1.5" y1="14.5" x2="17" y2="14.5" stroke="#555" stroke-width="1.1"/><line x1="1.5" y1="17" x2="17" y2="17" stroke="#555" stroke-width="1.1"/></svg><svg style="position:absolute;left:1017px;top:135px" width="14" height="14" viewBox="0 0 14 14"><circle cx="7" cy="7" r="5.8" fill="#e27a78" stroke="#c86060" stroke-width="0.9"/></svg><svg style="position:absolute;left:1039px;top:135px" width="14" height="14" viewBox="0 0 14 14"><rect x="1" y="1" width="12" height="12" fill="#d6d6d6" stroke="#8a8a8a" stroke-width="1.1"/></svg><svg style="position:absolute;left:1067px;top:132px" width="16" height="18" viewBox="0 0 16 18"><path d="M3.5 1.5 L1.5 9 M7 1.5 L5 9" stroke="#8fd060" stroke-width="2"/><line x1="10" y1="5" x2="15" y2="5" stroke="#555" stroke-width="1.1"/><line x1="10" y1="7.5" x2="15" y2="7.5" stroke="#555" stroke-width="1.1"/><line x1="10" y1="10" x2="15" y2="10" stroke="#555" stroke-width="1.1"/><line x1="1" y1="12.5" x2="15" y2="12.5" stroke="#555" stroke-width="1.1"/><line x1="1" y1="15" x2="15" y2="15" stroke="#555" stroke-width="1.1"/><line x1="1" y1="17.3" x2="15" y2="17.3" stroke="#555" stroke-width="1.1"/></svg><svg style="position:absolute;left:1089px;top:132px" width="16" height="18" viewBox="0 0 16 18"><line x1="11" y1="5" x2="15" y2="5" stroke="#555" stroke-width="1.1"/><line x1="11" y1="7.5" x2="15" y2="7.5" stroke="#555" stroke-width="1.1"/><line x1="11" y1="10" x2="15" y2="10" stroke="#555" stroke-width="1.1"/><line x1="1" y1="12.5" x2="15" y2="12.5" stroke="#555" stroke-width="1.1"/><line x1="1" y1="15" x2="15" y2="15" stroke="#555" stroke-width="1.1"/><line x1="1" y1="17.3" x2="15" y2="17.3" stroke="#555" stroke-width="1.1"/></svg><svg style="position:absolute;left:1900px;top:136px" width="11" height="11" viewBox="0 0 11 11"><rect x="0.5" y="0.5" width="10" height="10" fill="none" stroke="#555"/><line x1="5.5" y1="1" x2="5.5" y2="10" stroke="#555"/><line x1="1" y1="5.5" x2="10" y2="5.5" stroke="#555"/></svg><div style="position:absolute;left:541px;top:155px;width:1374px;height:823px;background:#ffffff;"></div><div style="position:absolute;left:541px;top:155px;width:35px;height:823px;background:#e9e9e6;"></div><div style="position:absolute;left:1892px;top:155px;width:23px;height:823px;background:#f3f3f3;"></div><div style="position:absolute;left:1893px;top:494px;width:8px;height:130px;background:#cdcdcd;"></div><div style="position:absolute;left:1904px;top:162px;width:8px;height:8px;background:#e6b400;"></div><div style="position:absolute;left:1904px;top:179px;width:9px;height:1px;background:#333;"></div><div style="position:absolute;left:1907px;top:178px;width:3px;height:3px;background:#333;border-radius:50%;"></div><div style="position:absolute;left:1903px;top:250.3px;width:11px;height:2.5px;background:#e6b400;"></div><div style="position:absolute;left:1903px;top:258.5px;width:11px;height:2.5px;background:#e6b400;"></div><div style="position:absolute;left:1903px;top:262.3px;width:11px;height:2.5px;background:#e6b400;"></div><div style="position:absolute;left:1903px;top:719.3px;width:11px;height:2.5px;background:#e6b400;"></div><div style="position:absolute;left:1903px;top:755.6px;width:11px;height:2.5px;background:#e6b400;"></div><div style="position:absolute;left:1903px;top:891.4px;width:11px;height:2.5px;background:#e6b400;"></div><div style="position:absolute;left:540px;top:978px;width:1376px;height:1px;background:#c2c2c2;"></div><div style="position:absolute;left:540px;top:979px;width:1376px;height:19px;background:#f2f2f2;"></div><svg style="position:absolute;left:549px;top:981px" width="10" height="15" viewBox="0 0 10 15"><polyline points="1.5,1.5 8,7.5 1.5,13.5" fill="none" stroke="#9a9a9a" stroke-width="1.8"/></svg><div style="position:absolute;left:540px;top:998px;width:1376px;height:1px;background:#c2c2c2;"></div><div style="position:absolute;left:540px;top:98px;width:1px;height:901px;background:#c4c4c4;"></div><div style="position:absolute;left:541px;top:155px;width:1351px;height:823px;overflow:hidden"><div style="position:absolute;left:64.0px;top:-12.1px;width:1px;height:833.0px;background:#ebebeb"></div><div style="position:absolute;left:96.0px;top:-12.1px;width:1px;height:833.0px;background:#ebebeb"></div><div style="position:absolute;left:128.0px;top:-12.1px;width:1px;height:833.0px;background:#ebebeb"></div><div style="position:absolute;left:160.0px;top:-12.1px;width:1px;height:68.0px;background:#ebebeb"></div><div style="position:absolute;left:160.0px;top:140.9px;width:1px;height:680.0px;background:#ebebeb"></div><div style="position:absolute;left:192.0px;top:-12.1px;width:1px;height:34.0px;background:#ebebeb"></div><div style="position:absolute;left:192.0px;top:174.9px;width:1px;height:646.0px;background:#ebebeb"></div><div style="position:absolute;left:224.0px;top:-12.1px;width:1px;height:34.0px;background:#ebebeb"></div><div style="position:absolute;left:224.0px;top:191.9px;width:1px;height:255.0px;background:#ebebeb"></div><div style="position:absolute;left:224.0px;top:463.9px;width:1px;height:238.0px;background:#ebebeb"></div><div style="position:absolute;left:224.0px;top:718.9px;width:1px;height:102.0px;background:#ebebeb"></div><div style="position:absolute;left:704px;top:0px;width:1px;height:823px;background:#c8c8c8"></div><div style="position:absolute;left:0px;top:-12.1px;width:31px;height:17px;text-align:right;font-family:'Liberation Sans', sans-serif;font-size:12.7px;line-height:17px;color:#222">121</div><div style="position:absolute;left:0px;top:4.9px;width:31px;height:17px;text-align:right;font-family:'Liberation Sans', sans-serif;font-size:12.7px;line-height:17px;color:#222">122</div><div style="position:absolute;left:0px;top:21.9px;width:31px;height:17px;text-align:right;font-family:'Liberation Sans', sans-serif;font-size:12.7px;line-height:17px;color:#222">123</div><div style="position:absolute;left:0px;top:38.9px;width:31px;height:17px;text-align:right;font-family:'Liberation Sans', sans-serif;font-size:12.7px;line-height:17px;color:#222">124</div><div style="position:absolute;left:0px;top:55.9px;width:31px;height:17px;text-align:right;font-family:'Liberation Sans', sans-serif;font-size:12.7px;line-height:17px;color:#222">125</div><div style="position:absolute;left:0px;top:72.9px;width:31px;height:17px;text-align:right;font-family:'Liberation Sans', sans-serif;font-size:12.7px;line-height:17px;color:#222">126</div><div style="position:absolute;left:0px;top:89.9px;width:31px;height:17px;text-align:right;font-family:'Liberation Sans', sans-serif;font-size:12.7px;line-height:17px;color:#222">127</div><div style="position:absolute;left:0px;top:106.9px;width:31px;height:17px;text-align:right;font-family:'Liberation Sans', sans-serif;font-size:12.7px;line-height:17px;color:#222">128</div><div style="position:absolute;left:0px;top:140.9px;width:31px;height:17px;text-align:right;font-family:'Liberation Sans', sans-serif;font-size:12.7px;line-height:17px;color:#222">130</div><div style="position:absolute;left:0px;top:157.9px;width:31px;height:17px;text-align:right;font-family:'Liberation Sans', sans-serif;font-size:12.7px;line-height:17px;color:#222">131</div><div style="position:absolute;left:0px;top:174.9px;width:31px;height:17px;text-align:right;font-family:'Liberation Sans', sans-serif;font-size:12.7px;line-height:17px;color:#222">132</div><div style="position:absolute;left:0px;top:191.9px;width:31px;height:17px;text-align:right;font-family:'Liberation Sans', sans-serif;font-size:12.7px;line-height:17px;color:#222">133</div><div style="position:absolute;left:0px;top:208.9px;width:31px;height:17px;text-align:right;font-family:'Liberation Sans', sans-serif;font-size:12.7px;line-height:17px;color:#222">134</div><div style="position:absolute;left:0px;top:225.9px;width:31px;height:17px;text-align:right;font-family:'Liberation Sans', sans-serif;font-size:12.7px;line-height:17px;color:#222">135</div><div style="position:absolute;left:0px;top:242.9px;width:31px;height:17px;text-align:right;font-family:'Liberation Sans', sans-serif;font-size:12.7px;line-height:17px;color:#222">136</div><div style="position:absolute;left:0px;top:259.9px;width:31px;height:17px;text-align:right;font-family:'Liberation Sans', sans-serif;font-size:12.7px;line-height:17px;color:#222">137</div><div style="position:absolute;left:0px;top:276.9px;width:31px;height:17px;text-align:right;font-family:'Liberation Sans', sans-serif;font-size:12.7px;line-height:17px;color:#222">138</div><div style="position:absolute;left:0px;top:293.9px;width:31px;height:17px;text-align:right;font-family:'Liberation Sans', sans-serif;font-size:12.7px;line-height:17px;color:#222">139</div><div style="position:absolute;left:0px;top:310.9px;width:31px;height:17px;text-align:right;font-family:'Liberation Sans', sans-serif;font-size:12.7px;line-height:17px;color:#222">140</div><div style="position:absolute;left:0px;top:327.9px;width:31px;height:17px;text-align:right;font-family:'Liberation Sans', sans-serif;font-size:12.7px;line-height:17px;color:#222">141</div><div style="position:absolute;left:0px;top:344.9px;width:31px;height:17px;text-align:right;font-family:'Liberation Sans', sans-serif;font-size:12.7px;line-height:17px;color:#222">142</div><div style="position:absolute;left:0px;top:361.9px;width:31px;height:17px;text-align:right;font-family:'Liberation Sans', sans-serif;font-size:12.7px;line-height:17px;color:#222">143</div><div style="position:absolute;left:0px;top:378.9px;width:31px;height:17px;text-align:right;font-family:'Liberation Sans', sans-serif;font-size:12.7px;line-height:17px;color:#222">144</div><div style="position:absolute;left:0px;top:395.9px;width:31px;height:17px;text-align:right;font-family:'Liberation Sans', sans-serif;font-size:12.7px;line-height:17px;color:#222">145</div><div style="position:absolute;left:0px;top:412.9px;width:31px;height:17px;text-align:right;font-family:'Liberation Sans', sans-serif;font-size:12.7px;line-height:17px;color:#222">146</div><div style="position:absolute;left:0px;top:429.9px;width:31px;height:17px;text-align:right;font-family:'Liberation Sans', sans-serif;font-size:12.7px;line-height:17px;color:#222">147</div><div style="position:absolute;left:0px;top:446.9px;width:31px;height:17px;text-align:right;font-family:'Liberation Sans', sans-serif;font-size:12.7px;line-height:17px;color:#222">148</div><div style="position:absolute;left:0px;top:463.9px;width:31px;height:17px;text-align:right;font-family:'Liberation Sans', sans-serif;font-size:12.7px;line-height:17px;color:#222">149</div><div style="position:absolute;left:0px;top:480.9px;width:31px;height:17px;text-align:right;font-family:'Liberation Sans', sans-serif;font-size:12.7px;line-height:17px;color:#222">150</div><div style="position:absolute;left:0px;top:497.9px;width:31px;height:17px;text-align:right;font-family:'Liberation Sans', sans-serif;font-size:12.7px;line-height:17px;color:#222">151</div><div style="position:absolute;left:0px;top:514.9px;width:31px;height:17px;text-align:right;font-family:'Liberation Sans', sans-serif;font-size:12.7px;line-height:17px;color:#222">152</div><div style="position:absolute;left:0px;top:531.9px;width:31px;height:17px;text-align:right;font-family:'Liberation Sans', sans-serif;font-size:12.7px;line-height:17px;color:#222">153</div><div style="position:absolute;left:0px;top:548.9px;width:31px;height:17px;text-align:right;font-family:'Liberation Sans', sans-serif;font-size:12.7px;line-height:17px;color:#222">154</div><div style="position:absolute;left:0px;top:565.9px;width:31px;height:17px;text-align:right;font-family:'Liberation Sans', sans-serif;font-size:12.7px;line-height:17px;color:#222">155</div><div style="position:absolute;left:0px;top:582.9px;width:31px;height:17px;text-align:right;font-family:'Liberation Sans', sans-serif;font-size:12.7px;line-height:17px;color:#222">156</div><div style="position:absolute;left:0px;top:599.9px;width:31px;height:17px;text-align:right;font-family:'Liberation Sans', sans-serif;font-size:12.7px;line-height:17px;color:#222">157</div><div style="position:absolute;left:0px;top:616.9px;width:31px;height:17px;text-align:right;font-family:'Liberation Sans', sans-serif;font-size:12.7px;line-height:17px;color:#222">158</div><div style="position:absolute;left:0px;top:633.9px;width:31px;height:17px;text-align:right;font-family:'Liberation Sans', sans-serif;font-size:12.7px;line-height:17px;color:#222">159</div><div style="position:absolute;left:0px;top:650.9px;width:31px;height:17px;text-align:right;font-family:'Liberation Sans', sans-serif;font-size:12.7px;line-height:17px;color:#222">160</div><div style="position:absolute;left:0px;top:667.9px;width:31px;height:17px;text-align:right;font-family:'Liberation Sans', sans-serif;font-size:12.7px;line-height:17px;color:#222">161</div><div style="position:absolute;left:0px;top:684.9px;width:31px;height:17px;text-align:right;font-family:'Liberation Sans', sans-serif;font-size:12.7px;line-height:17px;color:#222">162</div><div style="position:absolute;left:0px;top:701.9px;width:31px;height:17px;text-align:right;font-family:'Liberation Sans', sans-serif;font-size:12.7px;line-height:17px;color:#222">163</div><div style="position:absolute;left:0px;top:718.9px;width:31px;height:17px;text-align:right;font-family:'Liberation Sans', sans-serif;font-size:12.7px;line-height:17px;color:#222">164</div><div style="position:absolute;left:0px;top:735.9px;width:31px;height:17px;text-align:right;font-family:'Liberation Sans', sans-serif;font-size:12.7px;line-height:17px;color:#222">165</div><div style="position:absolute;left:0px;top:752.9px;width:31px;height:17px;text-align:right;font-family:'Liberation Sans', sans-serif;font-size:12.7px;line-height:17px;color:#222">166</div><div style="position:absolute;left:0px;top:769.9px;width:31px;height:17px;text-align:right;font-family:'Liberation Sans', sans-serif;font-size:12.7px;line-height:17px;color:#222">167</div><div style="position:absolute;left:0px;top:786.9px;width:31px;height:17px;text-align:right;font-family:'Liberation Sans', sans-serif;font-size:12.7px;line-height:17px;color:#222">168</div><div style="position:absolute;left:0px;top:803.9px;width:31px;height:17px;text-align:right;font-family:'Liberation Sans', sans-serif;font-size:12.7px;line-height:17px;color:#222">169</div><div style="position:absolute;left:47px;top:0px;width:1px;height:823px;background:#7a7a7a"></div><div style="position:absolute;left:47px;top:81px;width:5px;height:1px;background:#7a7a7a"></div><div style="position:absolute;left:43px;top:128px;width:9px;height:9px;background:#fff;border:1px solid #7a7a7a;box-sizing:border-box"></div><div style="position:absolute;left:45px;top:132px;width:5px;height:1px;background:#555"></div><svg style="position:absolute;left:23px;top:128px" width="11" height="11" viewBox="0 0 11 11"><circle cx="5.5" cy="5.5" r="4.6" fill="#d8f0c8" stroke="#4cae3c" stroke-width="1.6"/><circle cx="5.5" cy="5.5" r="1.7" fill="#4cae3c"/></svg><div style="position:absolute;left:64px;top:-12.1px;height:17px;white-space:pre;font-family:'Liberation Mono', monospace;font-size:13.33px;line-height:17px;color:#1e1e1e">                        <span style="color:#a5619f">vistaMP</span>.getPnlContent().setBackground(<span style="color:#5a73a9">new</span> Color(r, g, b));</div><div style="position:absolute;left:64px;top:4.9px;height:17px;white-space:pre;font-family:'Liberation Mono', monospace;font-size:13.33px;line-height:17px;color:#1e1e1e">                        <span style="color:#5a73a9">break</span>;</div><div style="position:absolute;left:64px;top:21.9px;height:17px;white-space:pre;font-family:'Liberation Mono', monospace;font-size:13.33px;line-height:17px;color:#1e1e1e"></div><div style="position:absolute;left:64px;top:38.9px;height:17px;white-space:pre;font-family:'Liberation Mono', monospace;font-size:13.33px;line-height:17px;color:#1e1e1e">                }</div><div style="position:absolute;left:64px;top:55.9px;height:17px;white-space:pre;font-family:'Liberation Mono', monospace;font-size:13.33px;line-height:17px;color:#1e1e1e"></div><div style="position:absolute;left:64px;top:72.9px;height:17px;white-space:pre;font-family:'Liberation Mono', monospace;font-size:13.33px;line-height:17px;color:#1e1e1e">            }</div><div style="position:absolute;left:64px;top:89.9px;height:17px;white-space:pre;font-family:'Liberation Mono', monospace;font-size:13.33px;line-height:17px;color:#1e1e1e"></div><div style="position:absolute;left:64px;top:106.9px;height:17px;white-space:pre;font-family:'Liberation Mono', monospace;font-size:13.33px;line-height:17px;color:#1e1e1e">            @Override</div><div style="position:absolute;left:64px;top:123.9px;height:17px;white-space:pre;font-family:'Liberation Mono', monospace;font-size:13.33px;line-height:17px;color:#1e1e1e">            <span style="color:#5a73a9">public</span> <span style="color:#5a73a9">void</span> <span style="font-weight:bold;color:#000">mousePressed</span>(MouseEvent e) {</div><div style="position:absolute;left:64px;top:140.9px;height:17px;white-space:pre;font-family:'Liberation Mono', monospace;font-size:13.33px;line-height:17px;color:#1e1e1e"></div><div style="position:absolute;left:64px;top:157.9px;height:17px;white-space:pre;font-family:'Liberation Mono', monospace;font-size:13.33px;line-height:17px;color:#1e1e1e">                <span style="color:#5a73a9">switch</span> (name) {</div><div style="position:absolute;left:64px;top:174.9px;height:17px;white-space:pre;font-family:'Liberation Mono', monospace;font-size:13.33px;line-height:17px;color:#1e1e1e">                    <span style="color:#5a73a9">case</span> <span style="color:#5c8c6c">&quot;cliente&quot;</span>:</div><div style="position:absolute;left:64px;top:191.9px;height:17px;white-space:pre;font-family:'Liberation Mono', monospace;font-size:13.33px;line-height:17px;color:#1e1e1e">                        VistaRegistro vRegis = <span style="color:#5a73a9">new</span> VistaRegistro();</div><div style="position:absolute;left:64px;top:208.9px;height:17px;white-space:pre;font-family:'Liberation Mono', monospace;font-size:13.33px;line-height:17px;color:#1e1e1e">                        ModeloPersona Mper = <span style="color:#5a73a9">new</span> ModeloPersona();</div><div style="position:absolute;left:64px;top:225.9px;height:17px;white-space:pre;font-family:'Liberation Mono', monospace;font-size:13.33px;line-height:17px;color:#1e1e1e">                        ModeloMascota Mmas = <span style="color:#5a73a9">new</span> ModeloMascota();</div><div style="position:absolute;left:64px;top:242.9px;height:17px;white-space:pre;font-family:'Liberation Mono', monospace;font-size:13.33px;line-height:17px;color:#1e1e1e">                        ModeloCliente Ccli = <span style="color:#5a73a9">new</span> ModeloCliente();</div><div style="position:absolute;left:64px;top:259.9px;height:17px;white-space:pre;font-family:'Liberation Mono', monospace;font-size:13.33px;line-height:17px;color:#1e1e1e">                        ControlRegistro ctn = <span style="color:#5a73a9">new</span> ControlRegistro(vRegis, Mper, Mmas, Ccli);</div><div style="position:absolute;left:64px;top:276.9px;height:17px;white-space:pre;font-family:'Liberation Mono', monospace;font-size:13.33px;line-height:17px;color:#1e1e1e">                        ctn.iniciarControl();</div><div style="position:absolute;left:64px;top:293.9px;height:17px;white-space:pre;font-family:'Liberation Mono', monospace;font-size:13.33px;line-height:17px;color:#1e1e1e">                        vRegis.resetKeyboardActions();</div><div style="position:absolute;left:64px;top:310.9px;height:17px;white-space:pre;font-family:'Liberation Mono', monospace;font-size:13.33px;line-height:17px;color:#1e1e1e">                        vRegis.setSize(960, 730);</div><div style="position:absolute;left:64px;top:327.9px;height:17px;white-space:pre;font-family:'Liberation Mono', monospace;font-size:13.33px;line-height:17px;color:#1e1e1e">                        vRegis.setLocation(0, 0);</div><div style="position:absolute;left:64px;top:344.9px;height:17px;white-space:pre;font-family:'Liberation Mono', monospace;font-size:13.33px;line-height:17px;color:#1e1e1e">                        <span style="color:#a5619f">vistaMP</span>.getPnlContent().removeAll();</div><div style="position:absolute;left:64px;top:361.9px;height:17px;white-space:pre;font-family:'Liberation Mono', monospace;font-size:13.33px;line-height:17px;color:#1e1e1e">                        <span style="color:#a5619f">vistaMP</span>.getPnlContent().add(vRegis, BorderLayout.<span style="color:#b068b0;font-style:italic">CENTER</span>);</div><div style="position:absolute;left:64px;top:378.9px;height:17px;white-space:pre;font-family:'Liberation Mono', monospace;font-size:13.33px;line-height:17px;color:#1e1e1e">                        <span style="color:#a5619f">vistaMP</span>.revalidate();</div><div style="position:absolute;left:64px;top:395.9px;height:17px;white-space:pre;font-family:'Liberation Mono', monospace;font-size:13.33px;line-height:17px;color:#1e1e1e">                        <span style="color:#a5619f">vistaMP</span>.getPnlContent().repaint();</div><div style="position:absolute;left:64px;top:412.9px;height:17px;white-space:pre;font-family:'Liberation Mono', monospace;font-size:13.33px;line-height:17px;color:#1e1e1e"></div><div style="position:absolute;left:64px;top:429.9px;height:17px;white-space:pre;font-family:'Liberation Mono', monospace;font-size:13.33px;line-height:17px;color:#1e1e1e">                        <span style="color:#5a73a9">break</span>;</div><div style="position:absolute;left:64px;top:446.9px;height:17px;white-space:pre;font-family:'Liberation Mono', monospace;font-size:13.33px;line-height:17px;color:#1e1e1e">                    <span style="color:#5a73a9">case</span> <span style="color:#5c8c6c">&quot;grooming&quot;</span>:</div><div style="position:absolute;left:64px;top:463.9px;height:17px;white-space:pre;font-family:'Liberation Mono', monospace;font-size:13.33px;line-height:17px;color:#1e1e1e">                        ModeloCliente cliG = <span style="color:#5a73a9">new</span> ModeloCliente();</div><div style="position:absolute;left:64px;top:480.9px;height:17px;white-space:pre;font-family:'Liberation Mono', monospace;font-size:13.33px;line-height:17px;color:#1e1e1e">                        VistaGrooming Vgro = <span style="color:#5a73a9">new</span> VistaGrooming();</div><div style="position:absolute;left:64px;top:497.9px;height:17px;white-space:pre;font-family:'Liberation Mono', monospace;font-size:13.33px;line-height:17px;color:#1e1e1e">                        ModeloMascota masG = <span style="color:#5a73a9">new</span> ModeloMascota();</div><div style="position:absolute;left:64px;top:514.9px;height:17px;white-space:pre;font-family:'Liberation Mono', monospace;font-size:13.33px;line-height:17px;color:#1e1e1e">                        ModeloGrooming Mgro = <span style="color:#5a73a9">new</span> ModeloGrooming();</div><div style="position:absolute;left:64px;top:531.9px;height:17px;white-space:pre;font-family:'Liberation Mono', monospace;font-size:13.33px;line-height:17px;color:#1e1e1e">                        ControlGrooming cntG = <span style="color:#5a73a9">new</span> ControlGrooming(Vgro, cliG, masG, Mgro);</div><div style="position:absolute;left:64px;top:548.9px;height:17px;white-space:pre;font-family:'Liberation Mono', monospace;font-size:13.33px;line-height:17px;color:#1e1e1e">                        cntG.iniciarControl();</div><div style="position:absolute;left:64px;top:565.9px;height:17px;white-space:pre;font-family:'Liberation Mono', monospace;font-size:13.33px;line-height:17px;color:#1e1e1e">                        Vgro.setSize(960, 730);</div><div style="position:absolute;left:64px;top:582.9px;height:17px;white-space:pre;font-family:'Liberation Mono', monospace;font-size:13.33px;line-height:17px;color:#1e1e1e">                        Vgro.setLocation(0, 0);</div><div style="position:absolute;left:64px;top:599.9px;height:17px;white-space:pre;font-family:'Liberation Mono', monospace;font-size:13.33px;line-height:17px;color:#1e1e1e">                        <span style="color:#a5619f">vistaMP</span>.getPnlContent().removeAll();</div><div style="position:absolute;left:64px;top:616.9px;height:17px;white-space:pre;font-family:'Liberation Mono', monospace;font-size:13.33px;line-height:17px;color:#1e1e1e">                        <span style="color:#a5619f">vistaMP</span>.getPnlContent().add(Vgro, BorderLayout.<span style="color:#b068b0;font-style:italic">CENTER</span>);</div><div style="position:absolute;left:64px;top:633.9px;height:17px;white-space:pre;font-family:'Liberation Mono', monospace;font-size:13.33px;line-height:17px;color:#1e1e1e">                        <span style="color:#a5619f">vistaMP</span>.revalidate();</div><div style="position:absolute;left:64px;top:650.9px;height:17px;white-space:pre;font-family:'Liberation Mono', monospace;font-size:13.33px;line-height:17px;color:#1e1e1e">                        <span style="color:#a5619f">vistaMP</span>.getPnlContent().repaint();</div><div style="position:absolute;left:64px;top:667.9px;height:17px;white-space:pre;font-family:'Liberation Mono', monospace;font-size:13.33px;line-height:17px;color:#1e1e1e"></div><div style="position:absolute;left:64px;top:684.9px;height:17px;white-space:pre;font-family:'Liberation Mono', monospace;font-size:13.33px;line-height:17px;color:#1e1e1e">                        <span style="color:#5a73a9">break</span>;</div><div style="position:absolute;left:64px;top:701.9px;height:17px;white-space:pre;font-family:'Liberation Mono', monospace;font-size:13.33px;line-height:17px;color:#1e1e1e">                    <span style="color:#5a73a9">case</span> <span style="color:#5c8c6c">&quot;mascota&quot;</span>:</div><div style="position:absolute;left:64px;top:718.9px;height:17px;white-space:pre;font-family:'Liberation Mono', monospace;font-size:13.33px;line-height:17px;color:#1e1e1e"></div><div style="position:absolute;left:64px;top:735.9px;height:17px;white-space:pre;font-family:'Liberation Mono', monospace;font-size:13.33px;line-height:17px;color:#1e1e1e">                        VistaMascota vMas = <span style="color:#5a73a9">new</span> VistaMascota();</div><div style="position:absolute;left:64px;top:752.9px;height:17px;white-space:pre;font-family:'Liberation Mono', monospace;font-size:13.33px;line-height:17px;color:#1e1e1e">                        ModeloCliente cliM = <span style="color:#5a73a9">new</span> ModeloCliente();</div><div style="position:absolute;left:64px;top:769.9px;height:17px;white-space:pre;font-family:'Liberation Mono', monospace;font-size:13.33px;line-height:17px;color:#1e1e1e">                        ModeloMascota masM = <span style="color:#5a73a9">new</span> ModeloMascota();</div><div style="position:absolute;left:64px;top:786.9px;height:17px;white-space:pre;font-family:'Liberation Mono', monospace;font-size:13.33px;line-height:17px;color:#1e1e1e">                        ControlMascota cntM = <span style="color:#5a73a9">new</span> ControlMascota(vMas, cliM, masM);</div><div style="position:absolute;left:64px;top:803.9px;height:17px;white-space:pre;font-family:'Liberation Mono', monospace;font-size:13.33px;line-height:17px;color:#1e1e1e">                        cntM.iniciarControl();</div></div><div style="position:absolute;left:0px;top:999px;width:1920px;height:26px;background:#f2f2f2;"></div><svg style="position:absolute;left:9px;top:1007px" width="11" height="11" viewBox="0 0 11 11"><rect x="0.5" y="3.5" width="7" height="7" fill="none" stroke="#444"/><path d="M3.5 3.5 V0.5 H10.5 V7.5 H7.5" fill="none" stroke="#444"/></svg><svg style="position:absolute;left:36px;top:1004px" width="17" height="16" viewBox="0 0 17 16"><rect x="0.5" y="0.5" width="14" height="13" fill="#fff" stroke="#8a9aa8"/>
<rect x="0.5" y="0.5" width="14" height="3" fill="#5a8ac0"/>
<path d="M5 9 C5 7 6 6.5 7 7.5 L8 7 L10 7 L11 7.5 C12 6.5 13.5 7 13.5 9 V13 C13.5 15 12 15.5 10 15.5 H8 C6 15.5 5 15 5 13 Z" fill="#f0d07a" stroke="#a88830" stroke-width="0.8"/></svg><div style="position:absolute;left:57px;top:1005.86px;white-space:pre;font-family:'Liberation Sans', sans-serif;font-size:13.4px;line-height:13.4px;color:#1b1b1b;transform:scaleX(1.0943);transform-origin:0 0;">Output</div><div style="position:absolute;left:1213.9px;top:1005.98px;white-space:pre;font-family:'Liberation Sans', sans-serif;font-size:13.25px;line-height:13.25px;color:#1b1b1b;transform:scaleX(1.0041);transform-origin:0 0;">ProyectoFinalVeterinariaPGV (run)</div><div style="position:absolute;left:1423px;top:1004.5px;width:200px;height:15px;background:#cdcdcd;"></div><div style="position:absolute;left:1497px;top:1006.33px;white-space:pre;font-family:'Liberation Sans', sans-serif;font-size:12.6px;line-height:12.6px;color:#1b1b1b;">running...</div><svg style="position:absolute;left:1632px;top:1007px" width="9" height="9" viewBox="0 0 9 9"><path d="M0.5 0.5 L8.5 8.5 M8.5 0.5 L0.5 8.5" stroke="#555" stroke-width="1.2"/></svg><div style="position:absolute;left:1663px;top:1003px;width:1px;height:18px;background:#d8d8d8;"></div><div style="position:absolute;left:1718.7px;top:1005.98px;white-space:pre;font-family:'Liberation Sans', sans-serif;font-size:13.25px;line-height:13.25px;color:#1b1b1b;transform:scaleX(0.88);transform-origin:0 0;">1:1</div><div style="position:absolute;left:1790px;top:1003px;width:1px;height:18px;background:#d8d8d8;"></div><div style="position:absolute;left:1794px;top:1005.98px;white-space:pre;font-family:'Liberation Sans', sans-serif;font-size:13.25px;line-height:13.25px;color:#1b1b1b;transform:scaleX(0.9829);transform-origin:0 0;">INS</div><div style="position:absolute;left:1818px;top:1003px;width:1px;height:18px;background:#d8d8d8;"></div><div style="position:absolute;left:1820.5px;top:1005.98px;white-space:pre;font-family:'Liberation Sans', sans-serif;font-size:13.25px;line-height:13.25px;color:#1b1b1b;transform:scaleX(0.9785);transform-origin:0 0;">Unix (LF)</div><svg style="position:absolute;left:1901px;top:984px" width="9" height="9" viewBox="0 0 9 9"><path d="M0.5 0.5 L8.5 8.5 M8.5 0.5 L0.5 8.5" stroke="#555" stroke-width="1.2"/></svg>
</body></html>
